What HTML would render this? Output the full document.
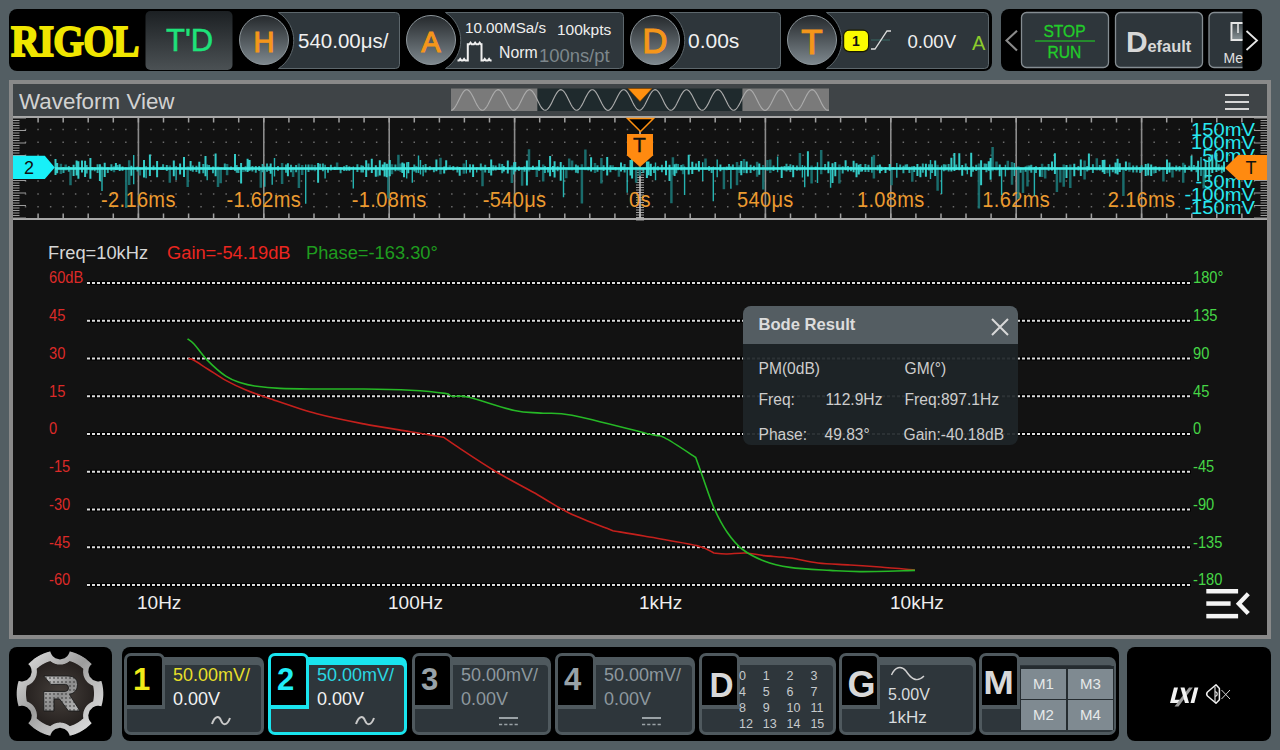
<!DOCTYPE html><html><head><meta charset="utf-8"><style>*{margin:0;padding:0;box-sizing:border-box}
html,body{width:1280px;height:750px;overflow:hidden;background:#535e63;font-family:"Liberation Sans",sans-serif}
.abs{position:absolute}
.t{position:absolute;white-space:nowrap;line-height:1}
</style></head><body><svg class="abs" style="left:0;top:0" width="1280" height="80"><defs><linearGradient id="cg" x1="0" y1="0" x2="0" y2="1"><stop offset="0" stop-color="#25292c"/><stop offset="1" stop-color="#7e888e"/></linearGradient><linearGradient id="tdg" x1="0" y1="0" x2="0" y2="1"><stop offset="0" stop-color="#1c2023"/><stop offset="1" stop-color="#4b5154"/></linearGradient></defs><rect x="9" y="9" width="983" height="62" rx="8" fill="#000"/><rect x="1001" y="9" width="261" height="62" rx="8" fill="#000"/><rect x="145.5" y="11" width="87" height="59" rx="5" fill="url(#tdg)"/><path d="M278.48,12.5 H395.5 a4,4 0 0 1 4,4 V64.5 a4,4 0 0 1 -4,4 H278.48 A33.3,33.3 0 0 0 278.48,12.5 Z" fill="#2e363b" stroke="#5d676c" stroke-width="1"/><circle cx="264" cy="40" r="24.5" fill="url(#cg)" stroke="#8c959a" stroke-width="1"/><path d="M445.48,12.5 H619.5 a4,4 0 0 1 4,4 V64.5 a4,4 0 0 1 -4,4 H445.48 A33.3,33.3 0 0 0 445.48,12.5 Z" fill="#2e363b" stroke="#5d676c" stroke-width="1"/><circle cx="431" cy="40" r="24.5" fill="url(#cg)" stroke="#8c959a" stroke-width="1"/><path d="M669.48,12.5 H776.5 a4,4 0 0 1 4,4 V64.5 a4,4 0 0 1 -4,4 H669.48 A33.3,33.3 0 0 0 669.48,12.5 Z" fill="#2e363b" stroke="#5d676c" stroke-width="1"/><circle cx="655" cy="40" r="24.5" fill="url(#cg)" stroke="#8c959a" stroke-width="1"/><path d="M826.48,12.5 H984.5 a4,4 0 0 1 4,4 V64.5 a4,4 0 0 1 -4,4 H826.48 A33.3,33.3 0 0 0 826.48,12.5 Z" fill="#2e363b" stroke="#5d676c" stroke-width="1"/><circle cx="812" cy="40" r="24.5" fill="url(#cg)" stroke="#8c959a" stroke-width="1"/><path d="M457.5,60.5 h1.5 l1.2,-1.6 l1.2,1.6 h1.5 l1.2,-1.6 l1.2,1.6 h2.5 V44.3 h1.5 l1.2,-1.6 l1.2,1.6 h2.2 l1.2,-1.6 l1.2,1.6 h2.2 l1.2,-1.6 l1.2,1.6 h0.6 V60.5 h2 l1.2,-1.6 l1.2,1.6 h2 l1.2,-1.6 l1.2,1.6 h1.3" fill="none" stroke="#f0f0f0" stroke-width="2"/><rect x="843.6" y="30.2" width="25" height="21.4" rx="5.5" fill="#fbfb00" stroke="#1a1a00" stroke-width="1.2"/><line x1="871" y1="40" x2="890" y2="40" stroke="#36625f" stroke-width="1.2"/><path d="M871,49 h4 L887,31 h4" fill="none" stroke="#dddddd" stroke-width="1.3"/><rect x="1021.5" y="12.5" width="87" height="55" rx="5" fill="#2e363b" stroke="#858d92" stroke-width="1.3"/><line x1="1035" y1="41" x2="1095" y2="41" stroke="#23a82a" stroke-width="1.3"/><rect x="1115.5" y="12.5" width="87" height="55" rx="5" fill="#2e363b" stroke="#858d92" stroke-width="1.3"/><clipPath id="clipm"><rect x="1205" y="0" width="37.5" height="80"/></clipPath><g clip-path="url(#clipm)"><rect x="1209" y="12.5" width="87" height="55" rx="5" fill="#2e363b" stroke="#858d92" stroke-width="1.3"/><linearGradient id="mg" x1="0" y1="0" x2="0" y2="1"><stop offset="0" stop-color="#3a4246"/><stop offset="1" stop-color="#8a9498"/></linearGradient><rect x="1232.5" y="23" width="12" height="17" fill="url(#mg)"/><path d="M1231.5,23 h14 v17 h-14 Z" fill="none" stroke="#e6e6e6" stroke-width="2"/><line x1="1238" y1="24" x2="1238" y2="33" stroke="#eee" stroke-width="1.5"/></g><path d="M1017,30.8 L1006.5,40.5 L1017,50.5" fill="none" stroke="#8a8a8a" stroke-width="2.1"/><path d="M1246.5,31 L1257,40.5 L1246.5,50" fill="none" stroke="#e6e6e6" stroke-width="1.8"/></svg><div class="t" style="left:11px;top:19px;font-family:'Liberation Serif', serif;font-weight:bold;font-size:45px;color:#f0e600;-webkit-text-stroke:1.8px #f0e600;transform:scaleX(0.88);transform-origin:0 0;letter-spacing:-1px">RIGOL</div><div class="t" style="left:166px;top:25px;font-size:31px;color:#1ee27a;-webkit-text-stroke:0.5px #1ee27a">T'D</div><div class="t" style="left:239px;top:27.5px;width:50px;text-align:center;font-size:29px;color:#f5961a;-webkit-text-stroke:1.1px #f5961a">H</div><div class="t" style="left:406px;top:28px;width:50px;text-align:center;font-size:29px;color:#f5961a;-webkit-text-stroke:1.1px #f5961a">A</div><div class="t" style="left:630px;top:23px;width:50px;text-align:center;font-size:35px;color:#f5961a;-webkit-text-stroke:1.1px #f5961a">D</div><div class="t" style="left:787px;top:23.5px;width:50px;text-align:center;font-size:35px;color:#f5961a;-webkit-text-stroke:1.1px #f5961a">T</div><div class="t" style="left:298px;top:31px;font-size:20.5px;color:#f0f0f0">540.00&mu;s/</div><div class="t" style="left:465px;top:20px;font-size:15.2px;color:#eeeeee">10.00MSa/s</div><div class="t" style="left:557px;top:22px;font-size:15.5px;color:#eeeeee">100kpts</div><div class="t" style="left:499px;top:45px;font-size:15.8px;color:#eeeeee">Norm</div><div class="t" style="left:539px;top:47px;font-size:18.4px;color:#7d878c">100ns/pt</div><div class="t" style="left:688px;top:30px;font-size:21px;color:#f0f0f0">0.00s</div><div class="t" style="left:850px;top:34px;width:12px;text-align:center;font-size:14px;font-weight:bold;color:#111">1</div><div class="t" style="left:907.5px;top:32.5px;font-size:18.6px;color:#f0f0f0">0.00V</div><div class="t" style="left:972px;top:32.5px;font-size:20px;color:#8ccc2c">A</div><div class="t" style="left:1021px;top:23.5px;width:87px;text-align:center;font-size:15.6px;color:#22cc2a;-webkit-text-stroke:0.3px #22cc2a">STOP</div><div class="t" style="left:1021px;top:44.5px;width:87px;text-align:center;font-size:15.6px;color:#22cc2a;-webkit-text-stroke:0.3px #22cc2a">RUN</div><div class="t" style="left:1126px;top:27px;font-size:30px;font-weight:bold;color:#d8d8d8">D</div><div class="t" style="left:1147.5px;top:37.5px;font-size:16.4px;font-weight:bold;color:#d8d8d8">efault</div><div class="t" style="left:1223.5px;top:50.5px;font-size:14px;color:#e0e0e0;clip-path:inset(0 0 0 0)"><span style="display:inline-block;width:20px;overflow:hidden">Me</span></div><div class="abs" style="left:9px;top:80px;width:1262px;height:559px;border:4px solid #898989;background:#121212"></div><div class="abs" style="left:13px;top:84px;width:1254px;height:32px;background:#3f4447"></div><div class="t" style="left:19px;top:91px;font-size:22.4px;color:#d2d2d2">Waveform View</div><div class="abs" style="left:1225px;top:94px;width:24px;height:2px;background:#d8d8d8"></div><div class="abs" style="left:1225px;top:101px;width:24px;height:2px;background:#d8d8d8"></div><div class="abs" style="left:1225px;top:107.5px;width:24px;height:2px;background:#d8d8d8"></div><svg class="abs" style="left:0;top:80px" width="1280" height="40"><rect x="451" y="8.5" width="86.5" height="22.5" fill="#7a7a7a"/><rect x="537.5" y="8.5" width="205" height="22.5" fill="#1f2a2d"/><rect x="742.5" y="8.5" width="86.5" height="22.5" fill="#7a7a7a"/><polyline points="451.0,30.30 452.0,30.09 453.0,29.49 454.0,28.50 455.0,27.17 456.0,25.56 457.0,23.73 458.0,21.74 459.0,19.69 460.0,17.65 461.0,15.70 462.0,13.93 463.0,12.40 464.0,11.17 465.0,10.29 466.0,9.80 467.0,9.72 468.0,10.05 469.0,10.77 470.0,11.87 471.0,13.28 472.0,14.97 473.0,16.86 474.0,18.87 475.0,20.93 476.0,22.95 477.0,24.85 478.0,26.56 479.0,28.01 480.0,29.13 481.0,29.90 482.0,30.27 483.0,30.23 484.0,29.78 485.0,28.94 486.0,27.74 487.0,26.24 488.0,24.48 489.0,22.55 490.0,20.52 491.0,18.46 492.0,16.47 493.0,14.61 494.0,12.98 495.0,11.62 496.0,10.60 497.0,9.95 498.0,9.70 499.0,9.87 500.0,10.44 501.0,11.39 502.0,12.68 503.0,14.27 504.0,16.08 505.0,18.05 506.0,20.10 507.0,22.15 508.0,24.11 509.0,25.90 510.0,27.46 511.0,28.73 512.0,29.64 513.0,30.17 514.0,30.29 515.0,30.00 516.0,29.32 517.0,28.26 518.0,26.87 519.0,25.21 520.0,23.34 521.0,21.34 522.0,19.28 523.0,17.25 524.0,15.33 525.0,13.60 526.0,12.12 527.0,10.96 528.0,10.16 529.0,9.75 530.0,9.75 531.0,10.16 532.0,10.96 533.0,12.12 534.0,13.60 535.0,15.33 536.0,17.25 537.0,19.28 538.0,21.34 539.0,23.34 540.0,25.21 541.0,26.87 542.0,28.26 543.0,29.32 544.0,30.00 545.0,30.29 546.0,30.17 547.0,29.64 548.0,28.73 549.0,27.46 550.0,25.90 551.0,24.11 552.0,22.15 553.0,20.10 554.0,18.05 555.0,16.08 556.0,14.27 557.0,12.68 558.0,11.39 559.0,10.44 560.0,9.87 561.0,9.70 562.0,9.95 563.0,10.60 564.0,11.62 565.0,12.98 566.0,14.61 567.0,16.47 568.0,18.46 569.0,20.52 570.0,22.55 571.0,24.48 572.0,26.24 573.0,27.74 574.0,28.94 575.0,29.78 576.0,30.23 577.0,30.27 578.0,29.90 579.0,29.13 580.0,28.01 581.0,26.56 582.0,24.85 583.0,22.95 584.0,20.93 585.0,18.87 586.0,16.86 587.0,14.97 588.0,13.28 589.0,11.87 590.0,10.77 591.0,10.05 592.0,9.72 593.0,9.80 594.0,10.29 595.0,11.17 596.0,12.40 597.0,13.93 598.0,15.70 599.0,17.65 600.0,19.69 601.0,21.74 602.0,23.73 603.0,25.56 604.0,27.17 605.0,28.50 606.0,29.49 607.0,30.09 608.0,30.30 609.0,30.09 610.0,29.49 611.0,28.50 612.0,27.17 613.0,25.56 614.0,23.73 615.0,21.74 616.0,19.69 617.0,17.65 618.0,15.70 619.0,13.93 620.0,12.40 621.0,11.17 622.0,10.29 623.0,9.80 624.0,9.72 625.0,10.05 626.0,10.77 627.0,11.87 628.0,13.28 629.0,14.97 630.0,16.86 631.0,18.87 632.0,20.93 633.0,22.95 634.0,24.85 635.0,26.56 636.0,28.01 637.0,29.13 638.0,29.90 639.0,30.27 640.0,30.23 641.0,29.78 642.0,28.94 643.0,27.74 644.0,26.24 645.0,24.48 646.0,22.55 647.0,20.52 648.0,18.46 649.0,16.47 650.0,14.61 651.0,12.98 652.0,11.62 653.0,10.60 654.0,9.95 655.0,9.70 656.0,9.87 657.0,10.44 658.0,11.39 659.0,12.68 660.0,14.27 661.0,16.08 662.0,18.05 663.0,20.10 664.0,22.15 665.0,24.11 666.0,25.90 667.0,27.46 668.0,28.73 669.0,29.64 670.0,30.17 671.0,30.29 672.0,30.00 673.0,29.32 674.0,28.26 675.0,26.87 676.0,25.21 677.0,23.34 678.0,21.34 679.0,19.28 680.0,17.25 681.0,15.33 682.0,13.60 683.0,12.12 684.0,10.96 685.0,10.16 686.0,9.75 687.0,9.75 688.0,10.16 689.0,10.96 690.0,12.12 691.0,13.60 692.0,15.33 693.0,17.25 694.0,19.28 695.0,21.34 696.0,23.34 697.0,25.21 698.0,26.87 699.0,28.26 700.0,29.32 701.0,30.00 702.0,30.29 703.0,30.17 704.0,29.64 705.0,28.73 706.0,27.46 707.0,25.90 708.0,24.11 709.0,22.15 710.0,20.10 711.0,18.05 712.0,16.08 713.0,14.27 714.0,12.68 715.0,11.39 716.0,10.44 717.0,9.87 718.0,9.70 719.0,9.95 720.0,10.60 721.0,11.62 722.0,12.98 723.0,14.61 724.0,16.47 725.0,18.46 726.0,20.52 727.0,22.55 728.0,24.48 729.0,26.24 730.0,27.74 731.0,28.94 732.0,29.78 733.0,30.23 734.0,30.27 735.0,29.90 736.0,29.13 737.0,28.01 738.0,26.56 739.0,24.85 740.0,22.95 741.0,20.93 742.0,18.87 743.0,16.86 744.0,14.97 745.0,13.28 746.0,11.87 747.0,10.77 748.0,10.05 749.0,9.72 750.0,9.80 751.0,10.29 752.0,11.17 753.0,12.40 754.0,13.93 755.0,15.70 756.0,17.65 757.0,19.69 758.0,21.74 759.0,23.73 760.0,25.56 761.0,27.17 762.0,28.50 763.0,29.49 764.0,30.09 765.0,30.30 766.0,30.09 767.0,29.49 768.0,28.50 769.0,27.17 770.0,25.56 771.0,23.73 772.0,21.74 773.0,19.69 774.0,17.65 775.0,15.70 776.0,13.93 777.0,12.40 778.0,11.17 779.0,10.29 780.0,9.80 781.0,9.72 782.0,10.05 783.0,10.77 784.0,11.87 785.0,13.28 786.0,14.97 787.0,16.86 788.0,18.87 789.0,20.93 790.0,22.95 791.0,24.85 792.0,26.56 793.0,28.01 794.0,29.13 795.0,29.90 796.0,30.27 797.0,30.23 798.0,29.78 799.0,28.94 800.0,27.74 801.0,26.24 802.0,24.48 803.0,22.55 804.0,20.52 805.0,18.46 806.0,16.47 807.0,14.61 808.0,12.98 809.0,11.62 810.0,10.60 811.0,9.95 812.0,9.70 813.0,9.87 814.0,10.44 815.0,11.39 816.0,12.68 817.0,14.27 818.0,16.08 819.0,18.05 820.0,20.10 821.0,22.15 822.0,24.11 823.0,25.90 824.0,27.46 825.0,28.73 826.0,29.64 827.0,30.17 828.0,30.29 829.0,30.00" fill="none" stroke="#ababab" stroke-width="1.15"/><path d="M628,8.5 L652,8.5 L640,21.5 Z" fill="#ff9010" stroke="#7a4000" stroke-width="0.6"/></svg><svg class="abs" style="left:0;top:0" width="1280" height="230"><rect x="13" y="116" width="1254" height="104" fill="#111111"/><path d="M24.8,128.7h1.5v1.5h-1.5zM37.3,128.7h1.5v1.5h-1.5zM49.9,128.7h1.5v1.5h-1.5zM62.4,128.7h1.5v1.5h-1.5zM74.9,128.7h1.5v1.5h-1.5zM87.5,128.7h1.5v1.5h-1.5zM100.0,128.7h1.5v1.5h-1.5zM112.6,128.7h1.5v1.5h-1.5zM125.1,128.7h1.5v1.5h-1.5zM137.6,128.7h1.5v1.5h-1.5zM150.2,128.7h1.5v1.5h-1.5zM162.7,128.7h1.5v1.5h-1.5zM175.3,128.7h1.5v1.5h-1.5zM187.8,128.7h1.5v1.5h-1.5zM200.3,128.7h1.5v1.5h-1.5zM212.9,128.7h1.5v1.5h-1.5zM225.4,128.7h1.5v1.5h-1.5zM238.0,128.7h1.5v1.5h-1.5zM250.5,128.7h1.5v1.5h-1.5zM263.0,128.7h1.5v1.5h-1.5zM275.6,128.7h1.5v1.5h-1.5zM288.1,128.7h1.5v1.5h-1.5zM300.7,128.7h1.5v1.5h-1.5zM313.2,128.7h1.5v1.5h-1.5zM325.8,128.7h1.5v1.5h-1.5zM338.3,128.7h1.5v1.5h-1.5zM350.8,128.7h1.5v1.5h-1.5zM363.4,128.7h1.5v1.5h-1.5zM375.9,128.7h1.5v1.5h-1.5zM388.4,128.7h1.5v1.5h-1.5zM401.0,128.7h1.5v1.5h-1.5zM413.5,128.7h1.5v1.5h-1.5zM426.1,128.7h1.5v1.5h-1.5zM438.6,128.7h1.5v1.5h-1.5zM451.1,128.7h1.5v1.5h-1.5zM463.7,128.7h1.5v1.5h-1.5zM476.2,128.7h1.5v1.5h-1.5zM488.8,128.7h1.5v1.5h-1.5zM501.3,128.7h1.5v1.5h-1.5zM513.8,128.7h1.5v1.5h-1.5zM526.4,128.7h1.5v1.5h-1.5zM538.9,128.7h1.5v1.5h-1.5zM551.5,128.7h1.5v1.5h-1.5zM564.0,128.7h1.5v1.5h-1.5zM576.5,128.7h1.5v1.5h-1.5zM589.1,128.7h1.5v1.5h-1.5zM601.6,128.7h1.5v1.5h-1.5zM614.2,128.7h1.5v1.5h-1.5zM626.7,128.7h1.5v1.5h-1.5zM639.2,128.7h1.5v1.5h-1.5zM651.8,128.7h1.5v1.5h-1.5zM664.3,128.7h1.5v1.5h-1.5zM676.9,128.7h1.5v1.5h-1.5zM689.4,128.7h1.5v1.5h-1.5zM701.9,128.7h1.5v1.5h-1.5zM714.5,128.7h1.5v1.5h-1.5zM727.0,128.7h1.5v1.5h-1.5zM739.6,128.7h1.5v1.5h-1.5zM752.1,128.7h1.5v1.5h-1.5zM764.6,128.7h1.5v1.5h-1.5zM777.2,128.7h1.5v1.5h-1.5zM789.7,128.7h1.5v1.5h-1.5zM802.3,128.7h1.5v1.5h-1.5zM814.8,128.7h1.5v1.5h-1.5zM827.3,128.7h1.5v1.5h-1.5zM839.9,128.7h1.5v1.5h-1.5zM852.4,128.7h1.5v1.5h-1.5zM865.0,128.7h1.5v1.5h-1.5zM877.5,128.7h1.5v1.5h-1.5zM890.0,128.7h1.5v1.5h-1.5zM902.6,128.7h1.5v1.5h-1.5zM915.1,128.7h1.5v1.5h-1.5zM927.7,128.7h1.5v1.5h-1.5zM940.2,128.7h1.5v1.5h-1.5zM952.7,128.7h1.5v1.5h-1.5zM965.3,128.7h1.5v1.5h-1.5zM977.8,128.7h1.5v1.5h-1.5zM990.4,128.7h1.5v1.5h-1.5zM1002.9,128.7h1.5v1.5h-1.5zM1015.4,128.7h1.5v1.5h-1.5zM1028.0,128.7h1.5v1.5h-1.5zM1040.5,128.7h1.5v1.5h-1.5zM1053.1,128.7h1.5v1.5h-1.5zM1065.6,128.7h1.5v1.5h-1.5zM1078.1,128.7h1.5v1.5h-1.5zM1090.7,128.7h1.5v1.5h-1.5zM1103.2,128.7h1.5v1.5h-1.5zM1115.8,128.7h1.5v1.5h-1.5zM1128.3,128.7h1.5v1.5h-1.5zM1140.8,128.7h1.5v1.5h-1.5zM1153.4,128.7h1.5v1.5h-1.5zM1165.9,128.7h1.5v1.5h-1.5zM1178.5,128.7h1.5v1.5h-1.5zM1191.0,128.7h1.5v1.5h-1.5zM1203.5,128.7h1.5v1.5h-1.5zM1216.1,128.7h1.5v1.5h-1.5zM1228.6,128.7h1.5v1.5h-1.5zM1241.2,128.7h1.5v1.5h-1.5zM1253.7,128.7h1.5v1.5h-1.5zM24.8,141.6h1.5v1.5h-1.5zM37.3,141.6h1.5v1.5h-1.5zM49.9,141.6h1.5v1.5h-1.5zM62.4,141.6h1.5v1.5h-1.5zM74.9,141.6h1.5v1.5h-1.5zM87.5,141.6h1.5v1.5h-1.5zM100.0,141.6h1.5v1.5h-1.5zM112.6,141.6h1.5v1.5h-1.5zM125.1,141.6h1.5v1.5h-1.5zM137.6,141.6h1.5v1.5h-1.5zM150.2,141.6h1.5v1.5h-1.5zM162.7,141.6h1.5v1.5h-1.5zM175.3,141.6h1.5v1.5h-1.5zM187.8,141.6h1.5v1.5h-1.5zM200.3,141.6h1.5v1.5h-1.5zM212.9,141.6h1.5v1.5h-1.5zM225.4,141.6h1.5v1.5h-1.5zM238.0,141.6h1.5v1.5h-1.5zM250.5,141.6h1.5v1.5h-1.5zM263.0,141.6h1.5v1.5h-1.5zM275.6,141.6h1.5v1.5h-1.5zM288.1,141.6h1.5v1.5h-1.5zM300.7,141.6h1.5v1.5h-1.5zM313.2,141.6h1.5v1.5h-1.5zM325.8,141.6h1.5v1.5h-1.5zM338.3,141.6h1.5v1.5h-1.5zM350.8,141.6h1.5v1.5h-1.5zM363.4,141.6h1.5v1.5h-1.5zM375.9,141.6h1.5v1.5h-1.5zM388.4,141.6h1.5v1.5h-1.5zM401.0,141.6h1.5v1.5h-1.5zM413.5,141.6h1.5v1.5h-1.5zM426.1,141.6h1.5v1.5h-1.5zM438.6,141.6h1.5v1.5h-1.5zM451.1,141.6h1.5v1.5h-1.5zM463.7,141.6h1.5v1.5h-1.5zM476.2,141.6h1.5v1.5h-1.5zM488.8,141.6h1.5v1.5h-1.5zM501.3,141.6h1.5v1.5h-1.5zM513.8,141.6h1.5v1.5h-1.5zM526.4,141.6h1.5v1.5h-1.5zM538.9,141.6h1.5v1.5h-1.5zM551.5,141.6h1.5v1.5h-1.5zM564.0,141.6h1.5v1.5h-1.5zM576.5,141.6h1.5v1.5h-1.5zM589.1,141.6h1.5v1.5h-1.5zM601.6,141.6h1.5v1.5h-1.5zM614.2,141.6h1.5v1.5h-1.5zM626.7,141.6h1.5v1.5h-1.5zM639.2,141.6h1.5v1.5h-1.5zM651.8,141.6h1.5v1.5h-1.5zM664.3,141.6h1.5v1.5h-1.5zM676.9,141.6h1.5v1.5h-1.5zM689.4,141.6h1.5v1.5h-1.5zM701.9,141.6h1.5v1.5h-1.5zM714.5,141.6h1.5v1.5h-1.5zM727.0,141.6h1.5v1.5h-1.5zM739.6,141.6h1.5v1.5h-1.5zM752.1,141.6h1.5v1.5h-1.5zM764.6,141.6h1.5v1.5h-1.5zM777.2,141.6h1.5v1.5h-1.5zM789.7,141.6h1.5v1.5h-1.5zM802.3,141.6h1.5v1.5h-1.5zM814.8,141.6h1.5v1.5h-1.5zM827.3,141.6h1.5v1.5h-1.5zM839.9,141.6h1.5v1.5h-1.5zM852.4,141.6h1.5v1.5h-1.5zM865.0,141.6h1.5v1.5h-1.5zM877.5,141.6h1.5v1.5h-1.5zM890.0,141.6h1.5v1.5h-1.5zM902.6,141.6h1.5v1.5h-1.5zM915.1,141.6h1.5v1.5h-1.5zM927.7,141.6h1.5v1.5h-1.5zM940.2,141.6h1.5v1.5h-1.5zM952.7,141.6h1.5v1.5h-1.5zM965.3,141.6h1.5v1.5h-1.5zM977.8,141.6h1.5v1.5h-1.5zM990.4,141.6h1.5v1.5h-1.5zM1002.9,141.6h1.5v1.5h-1.5zM1015.4,141.6h1.5v1.5h-1.5zM1028.0,141.6h1.5v1.5h-1.5zM1040.5,141.6h1.5v1.5h-1.5zM1053.1,141.6h1.5v1.5h-1.5zM1065.6,141.6h1.5v1.5h-1.5zM1078.1,141.6h1.5v1.5h-1.5zM1090.7,141.6h1.5v1.5h-1.5zM1103.2,141.6h1.5v1.5h-1.5zM1115.8,141.6h1.5v1.5h-1.5zM1128.3,141.6h1.5v1.5h-1.5zM1140.8,141.6h1.5v1.5h-1.5zM1153.4,141.6h1.5v1.5h-1.5zM1165.9,141.6h1.5v1.5h-1.5zM1178.5,141.6h1.5v1.5h-1.5zM1191.0,141.6h1.5v1.5h-1.5zM1203.5,141.6h1.5v1.5h-1.5zM1216.1,141.6h1.5v1.5h-1.5zM1228.6,141.6h1.5v1.5h-1.5zM1241.2,141.6h1.5v1.5h-1.5zM1253.7,141.6h1.5v1.5h-1.5zM24.8,154.4h1.5v1.5h-1.5zM37.3,154.4h1.5v1.5h-1.5zM49.9,154.4h1.5v1.5h-1.5zM62.4,154.4h1.5v1.5h-1.5zM74.9,154.4h1.5v1.5h-1.5zM87.5,154.4h1.5v1.5h-1.5zM100.0,154.4h1.5v1.5h-1.5zM112.6,154.4h1.5v1.5h-1.5zM125.1,154.4h1.5v1.5h-1.5zM137.6,154.4h1.5v1.5h-1.5zM150.2,154.4h1.5v1.5h-1.5zM162.7,154.4h1.5v1.5h-1.5zM175.3,154.4h1.5v1.5h-1.5zM187.8,154.4h1.5v1.5h-1.5zM200.3,154.4h1.5v1.5h-1.5zM212.9,154.4h1.5v1.5h-1.5zM225.4,154.4h1.5v1.5h-1.5zM238.0,154.4h1.5v1.5h-1.5zM250.5,154.4h1.5v1.5h-1.5zM263.0,154.4h1.5v1.5h-1.5zM275.6,154.4h1.5v1.5h-1.5zM288.1,154.4h1.5v1.5h-1.5zM300.7,154.4h1.5v1.5h-1.5zM313.2,154.4h1.5v1.5h-1.5zM325.8,154.4h1.5v1.5h-1.5zM338.3,154.4h1.5v1.5h-1.5zM350.8,154.4h1.5v1.5h-1.5zM363.4,154.4h1.5v1.5h-1.5zM375.9,154.4h1.5v1.5h-1.5zM388.4,154.4h1.5v1.5h-1.5zM401.0,154.4h1.5v1.5h-1.5zM413.5,154.4h1.5v1.5h-1.5zM426.1,154.4h1.5v1.5h-1.5zM438.6,154.4h1.5v1.5h-1.5zM451.1,154.4h1.5v1.5h-1.5zM463.7,154.4h1.5v1.5h-1.5zM476.2,154.4h1.5v1.5h-1.5zM488.8,154.4h1.5v1.5h-1.5zM501.3,154.4h1.5v1.5h-1.5zM513.8,154.4h1.5v1.5h-1.5zM526.4,154.4h1.5v1.5h-1.5zM538.9,154.4h1.5v1.5h-1.5zM551.5,154.4h1.5v1.5h-1.5zM564.0,154.4h1.5v1.5h-1.5zM576.5,154.4h1.5v1.5h-1.5zM589.1,154.4h1.5v1.5h-1.5zM601.6,154.4h1.5v1.5h-1.5zM614.2,154.4h1.5v1.5h-1.5zM626.7,154.4h1.5v1.5h-1.5zM639.2,154.4h1.5v1.5h-1.5zM651.8,154.4h1.5v1.5h-1.5zM664.3,154.4h1.5v1.5h-1.5zM676.9,154.4h1.5v1.5h-1.5zM689.4,154.4h1.5v1.5h-1.5zM701.9,154.4h1.5v1.5h-1.5zM714.5,154.4h1.5v1.5h-1.5zM727.0,154.4h1.5v1.5h-1.5zM739.6,154.4h1.5v1.5h-1.5zM752.1,154.4h1.5v1.5h-1.5zM764.6,154.4h1.5v1.5h-1.5zM777.2,154.4h1.5v1.5h-1.5zM789.7,154.4h1.5v1.5h-1.5zM802.3,154.4h1.5v1.5h-1.5zM814.8,154.4h1.5v1.5h-1.5zM827.3,154.4h1.5v1.5h-1.5zM839.9,154.4h1.5v1.5h-1.5zM852.4,154.4h1.5v1.5h-1.5zM865.0,154.4h1.5v1.5h-1.5zM877.5,154.4h1.5v1.5h-1.5zM890.0,154.4h1.5v1.5h-1.5zM902.6,154.4h1.5v1.5h-1.5zM915.1,154.4h1.5v1.5h-1.5zM927.7,154.4h1.5v1.5h-1.5zM940.2,154.4h1.5v1.5h-1.5zM952.7,154.4h1.5v1.5h-1.5zM965.3,154.4h1.5v1.5h-1.5zM977.8,154.4h1.5v1.5h-1.5zM990.4,154.4h1.5v1.5h-1.5zM1002.9,154.4h1.5v1.5h-1.5zM1015.4,154.4h1.5v1.5h-1.5zM1028.0,154.4h1.5v1.5h-1.5zM1040.5,154.4h1.5v1.5h-1.5zM1053.1,154.4h1.5v1.5h-1.5zM1065.6,154.4h1.5v1.5h-1.5zM1078.1,154.4h1.5v1.5h-1.5zM1090.7,154.4h1.5v1.5h-1.5zM1103.2,154.4h1.5v1.5h-1.5zM1115.8,154.4h1.5v1.5h-1.5zM1128.3,154.4h1.5v1.5h-1.5zM1140.8,154.4h1.5v1.5h-1.5zM1153.4,154.4h1.5v1.5h-1.5zM1165.9,154.4h1.5v1.5h-1.5zM1178.5,154.4h1.5v1.5h-1.5zM1191.0,154.4h1.5v1.5h-1.5zM1203.5,154.4h1.5v1.5h-1.5zM1216.1,154.4h1.5v1.5h-1.5zM1228.6,154.4h1.5v1.5h-1.5zM1241.2,154.4h1.5v1.5h-1.5zM1253.7,154.4h1.5v1.5h-1.5zM24.8,167.3h1.5v1.5h-1.5zM37.3,167.3h1.5v1.5h-1.5zM49.9,167.3h1.5v1.5h-1.5zM62.4,167.3h1.5v1.5h-1.5zM74.9,167.3h1.5v1.5h-1.5zM87.5,167.3h1.5v1.5h-1.5zM100.0,167.3h1.5v1.5h-1.5zM112.6,167.3h1.5v1.5h-1.5zM125.1,167.3h1.5v1.5h-1.5zM137.6,167.3h1.5v1.5h-1.5zM150.2,167.3h1.5v1.5h-1.5zM162.7,167.3h1.5v1.5h-1.5zM175.3,167.3h1.5v1.5h-1.5zM187.8,167.3h1.5v1.5h-1.5zM200.3,167.3h1.5v1.5h-1.5zM212.9,167.3h1.5v1.5h-1.5zM225.4,167.3h1.5v1.5h-1.5zM238.0,167.3h1.5v1.5h-1.5zM250.5,167.3h1.5v1.5h-1.5zM263.0,167.3h1.5v1.5h-1.5zM275.6,167.3h1.5v1.5h-1.5zM288.1,167.3h1.5v1.5h-1.5zM300.7,167.3h1.5v1.5h-1.5zM313.2,167.3h1.5v1.5h-1.5zM325.8,167.3h1.5v1.5h-1.5zM338.3,167.3h1.5v1.5h-1.5zM350.8,167.3h1.5v1.5h-1.5zM363.4,167.3h1.5v1.5h-1.5zM375.9,167.3h1.5v1.5h-1.5zM388.4,167.3h1.5v1.5h-1.5zM401.0,167.3h1.5v1.5h-1.5zM413.5,167.3h1.5v1.5h-1.5zM426.1,167.3h1.5v1.5h-1.5zM438.6,167.3h1.5v1.5h-1.5zM451.1,167.3h1.5v1.5h-1.5zM463.7,167.3h1.5v1.5h-1.5zM476.2,167.3h1.5v1.5h-1.5zM488.8,167.3h1.5v1.5h-1.5zM501.3,167.3h1.5v1.5h-1.5zM513.8,167.3h1.5v1.5h-1.5zM526.4,167.3h1.5v1.5h-1.5zM538.9,167.3h1.5v1.5h-1.5zM551.5,167.3h1.5v1.5h-1.5zM564.0,167.3h1.5v1.5h-1.5zM576.5,167.3h1.5v1.5h-1.5zM589.1,167.3h1.5v1.5h-1.5zM601.6,167.3h1.5v1.5h-1.5zM614.2,167.3h1.5v1.5h-1.5zM626.7,167.3h1.5v1.5h-1.5zM639.2,167.3h1.5v1.5h-1.5zM651.8,167.3h1.5v1.5h-1.5zM664.3,167.3h1.5v1.5h-1.5zM676.9,167.3h1.5v1.5h-1.5zM689.4,167.3h1.5v1.5h-1.5zM701.9,167.3h1.5v1.5h-1.5zM714.5,167.3h1.5v1.5h-1.5zM727.0,167.3h1.5v1.5h-1.5zM739.6,167.3h1.5v1.5h-1.5zM752.1,167.3h1.5v1.5h-1.5zM764.6,167.3h1.5v1.5h-1.5zM777.2,167.3h1.5v1.5h-1.5zM789.7,167.3h1.5v1.5h-1.5zM802.3,167.3h1.5v1.5h-1.5zM814.8,167.3h1.5v1.5h-1.5zM827.3,167.3h1.5v1.5h-1.5zM839.9,167.3h1.5v1.5h-1.5zM852.4,167.3h1.5v1.5h-1.5zM865.0,167.3h1.5v1.5h-1.5zM877.5,167.3h1.5v1.5h-1.5zM890.0,167.3h1.5v1.5h-1.5zM902.6,167.3h1.5v1.5h-1.5zM915.1,167.3h1.5v1.5h-1.5zM927.7,167.3h1.5v1.5h-1.5zM940.2,167.3h1.5v1.5h-1.5zM952.7,167.3h1.5v1.5h-1.5zM965.3,167.3h1.5v1.5h-1.5zM977.8,167.3h1.5v1.5h-1.5zM990.4,167.3h1.5v1.5h-1.5zM1002.9,167.3h1.5v1.5h-1.5zM1015.4,167.3h1.5v1.5h-1.5zM1028.0,167.3h1.5v1.5h-1.5zM1040.5,167.3h1.5v1.5h-1.5zM1053.1,167.3h1.5v1.5h-1.5zM1065.6,167.3h1.5v1.5h-1.5zM1078.1,167.3h1.5v1.5h-1.5zM1090.7,167.3h1.5v1.5h-1.5zM1103.2,167.3h1.5v1.5h-1.5zM1115.8,167.3h1.5v1.5h-1.5zM1128.3,167.3h1.5v1.5h-1.5zM1140.8,167.3h1.5v1.5h-1.5zM1153.4,167.3h1.5v1.5h-1.5zM1165.9,167.3h1.5v1.5h-1.5zM1178.5,167.3h1.5v1.5h-1.5zM1191.0,167.3h1.5v1.5h-1.5zM1203.5,167.3h1.5v1.5h-1.5zM1216.1,167.3h1.5v1.5h-1.5zM1228.6,167.3h1.5v1.5h-1.5zM1241.2,167.3h1.5v1.5h-1.5zM1253.7,167.3h1.5v1.5h-1.5zM24.8,180.2h1.5v1.5h-1.5zM37.3,180.2h1.5v1.5h-1.5zM49.9,180.2h1.5v1.5h-1.5zM62.4,180.2h1.5v1.5h-1.5zM74.9,180.2h1.5v1.5h-1.5zM87.5,180.2h1.5v1.5h-1.5zM100.0,180.2h1.5v1.5h-1.5zM112.6,180.2h1.5v1.5h-1.5zM125.1,180.2h1.5v1.5h-1.5zM137.6,180.2h1.5v1.5h-1.5zM150.2,180.2h1.5v1.5h-1.5zM162.7,180.2h1.5v1.5h-1.5zM175.3,180.2h1.5v1.5h-1.5zM187.8,180.2h1.5v1.5h-1.5zM200.3,180.2h1.5v1.5h-1.5zM212.9,180.2h1.5v1.5h-1.5zM225.4,180.2h1.5v1.5h-1.5zM238.0,180.2h1.5v1.5h-1.5zM250.5,180.2h1.5v1.5h-1.5zM263.0,180.2h1.5v1.5h-1.5zM275.6,180.2h1.5v1.5h-1.5zM288.1,180.2h1.5v1.5h-1.5zM300.7,180.2h1.5v1.5h-1.5zM313.2,180.2h1.5v1.5h-1.5zM325.8,180.2h1.5v1.5h-1.5zM338.3,180.2h1.5v1.5h-1.5zM350.8,180.2h1.5v1.5h-1.5zM363.4,180.2h1.5v1.5h-1.5zM375.9,180.2h1.5v1.5h-1.5zM388.4,180.2h1.5v1.5h-1.5zM401.0,180.2h1.5v1.5h-1.5zM413.5,180.2h1.5v1.5h-1.5zM426.1,180.2h1.5v1.5h-1.5zM438.6,180.2h1.5v1.5h-1.5zM451.1,180.2h1.5v1.5h-1.5zM463.7,180.2h1.5v1.5h-1.5zM476.2,180.2h1.5v1.5h-1.5zM488.8,180.2h1.5v1.5h-1.5zM501.3,180.2h1.5v1.5h-1.5zM513.8,180.2h1.5v1.5h-1.5zM526.4,180.2h1.5v1.5h-1.5zM538.9,180.2h1.5v1.5h-1.5zM551.5,180.2h1.5v1.5h-1.5zM564.0,180.2h1.5v1.5h-1.5zM576.5,180.2h1.5v1.5h-1.5zM589.1,180.2h1.5v1.5h-1.5zM601.6,180.2h1.5v1.5h-1.5zM614.2,180.2h1.5v1.5h-1.5zM626.7,180.2h1.5v1.5h-1.5zM639.2,180.2h1.5v1.5h-1.5zM651.8,180.2h1.5v1.5h-1.5zM664.3,180.2h1.5v1.5h-1.5zM676.9,180.2h1.5v1.5h-1.5zM689.4,180.2h1.5v1.5h-1.5zM701.9,180.2h1.5v1.5h-1.5zM714.5,180.2h1.5v1.5h-1.5zM727.0,180.2h1.5v1.5h-1.5zM739.6,180.2h1.5v1.5h-1.5zM752.1,180.2h1.5v1.5h-1.5zM764.6,180.2h1.5v1.5h-1.5zM777.2,180.2h1.5v1.5h-1.5zM789.7,180.2h1.5v1.5h-1.5zM802.3,180.2h1.5v1.5h-1.5zM814.8,180.2h1.5v1.5h-1.5zM827.3,180.2h1.5v1.5h-1.5zM839.9,180.2h1.5v1.5h-1.5zM852.4,180.2h1.5v1.5h-1.5zM865.0,180.2h1.5v1.5h-1.5zM877.5,180.2h1.5v1.5h-1.5zM890.0,180.2h1.5v1.5h-1.5zM902.6,180.2h1.5v1.5h-1.5zM915.1,180.2h1.5v1.5h-1.5zM927.7,180.2h1.5v1.5h-1.5zM940.2,180.2h1.5v1.5h-1.5zM952.7,180.2h1.5v1.5h-1.5zM965.3,180.2h1.5v1.5h-1.5zM977.8,180.2h1.5v1.5h-1.5zM990.4,180.2h1.5v1.5h-1.5zM1002.9,180.2h1.5v1.5h-1.5zM1015.4,180.2h1.5v1.5h-1.5zM1028.0,180.2h1.5v1.5h-1.5zM1040.5,180.2h1.5v1.5h-1.5zM1053.1,180.2h1.5v1.5h-1.5zM1065.6,180.2h1.5v1.5h-1.5zM1078.1,180.2h1.5v1.5h-1.5zM1090.7,180.2h1.5v1.5h-1.5zM1103.2,180.2h1.5v1.5h-1.5zM1115.8,180.2h1.5v1.5h-1.5zM1128.3,180.2h1.5v1.5h-1.5zM1140.8,180.2h1.5v1.5h-1.5zM1153.4,180.2h1.5v1.5h-1.5zM1165.9,180.2h1.5v1.5h-1.5zM1178.5,180.2h1.5v1.5h-1.5zM1191.0,180.2h1.5v1.5h-1.5zM1203.5,180.2h1.5v1.5h-1.5zM1216.1,180.2h1.5v1.5h-1.5zM1228.6,180.2h1.5v1.5h-1.5zM1241.2,180.2h1.5v1.5h-1.5zM1253.7,180.2h1.5v1.5h-1.5zM24.8,193.2h1.5v1.5h-1.5zM37.3,193.2h1.5v1.5h-1.5zM49.9,193.2h1.5v1.5h-1.5zM62.4,193.2h1.5v1.5h-1.5zM74.9,193.2h1.5v1.5h-1.5zM87.5,193.2h1.5v1.5h-1.5zM100.0,193.2h1.5v1.5h-1.5zM112.6,193.2h1.5v1.5h-1.5zM125.1,193.2h1.5v1.5h-1.5zM137.6,193.2h1.5v1.5h-1.5zM150.2,193.2h1.5v1.5h-1.5zM162.7,193.2h1.5v1.5h-1.5zM175.3,193.2h1.5v1.5h-1.5zM187.8,193.2h1.5v1.5h-1.5zM200.3,193.2h1.5v1.5h-1.5zM212.9,193.2h1.5v1.5h-1.5zM225.4,193.2h1.5v1.5h-1.5zM238.0,193.2h1.5v1.5h-1.5zM250.5,193.2h1.5v1.5h-1.5zM263.0,193.2h1.5v1.5h-1.5zM275.6,193.2h1.5v1.5h-1.5zM288.1,193.2h1.5v1.5h-1.5zM300.7,193.2h1.5v1.5h-1.5zM313.2,193.2h1.5v1.5h-1.5zM325.8,193.2h1.5v1.5h-1.5zM338.3,193.2h1.5v1.5h-1.5zM350.8,193.2h1.5v1.5h-1.5zM363.4,193.2h1.5v1.5h-1.5zM375.9,193.2h1.5v1.5h-1.5zM388.4,193.2h1.5v1.5h-1.5zM401.0,193.2h1.5v1.5h-1.5zM413.5,193.2h1.5v1.5h-1.5zM426.1,193.2h1.5v1.5h-1.5zM438.6,193.2h1.5v1.5h-1.5zM451.1,193.2h1.5v1.5h-1.5zM463.7,193.2h1.5v1.5h-1.5zM476.2,193.2h1.5v1.5h-1.5zM488.8,193.2h1.5v1.5h-1.5zM501.3,193.2h1.5v1.5h-1.5zM513.8,193.2h1.5v1.5h-1.5zM526.4,193.2h1.5v1.5h-1.5zM538.9,193.2h1.5v1.5h-1.5zM551.5,193.2h1.5v1.5h-1.5zM564.0,193.2h1.5v1.5h-1.5zM576.5,193.2h1.5v1.5h-1.5zM589.1,193.2h1.5v1.5h-1.5zM601.6,193.2h1.5v1.5h-1.5zM614.2,193.2h1.5v1.5h-1.5zM626.7,193.2h1.5v1.5h-1.5zM639.2,193.2h1.5v1.5h-1.5zM651.8,193.2h1.5v1.5h-1.5zM664.3,193.2h1.5v1.5h-1.5zM676.9,193.2h1.5v1.5h-1.5zM689.4,193.2h1.5v1.5h-1.5zM701.9,193.2h1.5v1.5h-1.5zM714.5,193.2h1.5v1.5h-1.5zM727.0,193.2h1.5v1.5h-1.5zM739.6,193.2h1.5v1.5h-1.5zM752.1,193.2h1.5v1.5h-1.5zM764.6,193.2h1.5v1.5h-1.5zM777.2,193.2h1.5v1.5h-1.5zM789.7,193.2h1.5v1.5h-1.5zM802.3,193.2h1.5v1.5h-1.5zM814.8,193.2h1.5v1.5h-1.5zM827.3,193.2h1.5v1.5h-1.5zM839.9,193.2h1.5v1.5h-1.5zM852.4,193.2h1.5v1.5h-1.5zM865.0,193.2h1.5v1.5h-1.5zM877.5,193.2h1.5v1.5h-1.5zM890.0,193.2h1.5v1.5h-1.5zM902.6,193.2h1.5v1.5h-1.5zM915.1,193.2h1.5v1.5h-1.5zM927.7,193.2h1.5v1.5h-1.5zM940.2,193.2h1.5v1.5h-1.5zM952.7,193.2h1.5v1.5h-1.5zM965.3,193.2h1.5v1.5h-1.5zM977.8,193.2h1.5v1.5h-1.5zM990.4,193.2h1.5v1.5h-1.5zM1002.9,193.2h1.5v1.5h-1.5zM1015.4,193.2h1.5v1.5h-1.5zM1028.0,193.2h1.5v1.5h-1.5zM1040.5,193.2h1.5v1.5h-1.5zM1053.1,193.2h1.5v1.5h-1.5zM1065.6,193.2h1.5v1.5h-1.5zM1078.1,193.2h1.5v1.5h-1.5zM1090.7,193.2h1.5v1.5h-1.5zM1103.2,193.2h1.5v1.5h-1.5zM1115.8,193.2h1.5v1.5h-1.5zM1128.3,193.2h1.5v1.5h-1.5zM1140.8,193.2h1.5v1.5h-1.5zM1153.4,193.2h1.5v1.5h-1.5zM1165.9,193.2h1.5v1.5h-1.5zM1178.5,193.2h1.5v1.5h-1.5zM1191.0,193.2h1.5v1.5h-1.5zM1203.5,193.2h1.5v1.5h-1.5zM1216.1,193.2h1.5v1.5h-1.5zM1228.6,193.2h1.5v1.5h-1.5zM1241.2,193.2h1.5v1.5h-1.5zM1253.7,193.2h1.5v1.5h-1.5zM24.8,206.1h1.5v1.5h-1.5zM37.3,206.1h1.5v1.5h-1.5zM49.9,206.1h1.5v1.5h-1.5zM62.4,206.1h1.5v1.5h-1.5zM74.9,206.1h1.5v1.5h-1.5zM87.5,206.1h1.5v1.5h-1.5zM100.0,206.1h1.5v1.5h-1.5zM112.6,206.1h1.5v1.5h-1.5zM125.1,206.1h1.5v1.5h-1.5zM137.6,206.1h1.5v1.5h-1.5zM150.2,206.1h1.5v1.5h-1.5zM162.7,206.1h1.5v1.5h-1.5zM175.3,206.1h1.5v1.5h-1.5zM187.8,206.1h1.5v1.5h-1.5zM200.3,206.1h1.5v1.5h-1.5zM212.9,206.1h1.5v1.5h-1.5zM225.4,206.1h1.5v1.5h-1.5zM238.0,206.1h1.5v1.5h-1.5zM250.5,206.1h1.5v1.5h-1.5zM263.0,206.1h1.5v1.5h-1.5zM275.6,206.1h1.5v1.5h-1.5zM288.1,206.1h1.5v1.5h-1.5zM300.7,206.1h1.5v1.5h-1.5zM313.2,206.1h1.5v1.5h-1.5zM325.8,206.1h1.5v1.5h-1.5zM338.3,206.1h1.5v1.5h-1.5zM350.8,206.1h1.5v1.5h-1.5zM363.4,206.1h1.5v1.5h-1.5zM375.9,206.1h1.5v1.5h-1.5zM388.4,206.1h1.5v1.5h-1.5zM401.0,206.1h1.5v1.5h-1.5zM413.5,206.1h1.5v1.5h-1.5zM426.1,206.1h1.5v1.5h-1.5zM438.6,206.1h1.5v1.5h-1.5zM451.1,206.1h1.5v1.5h-1.5zM463.7,206.1h1.5v1.5h-1.5zM476.2,206.1h1.5v1.5h-1.5zM488.8,206.1h1.5v1.5h-1.5zM501.3,206.1h1.5v1.5h-1.5zM513.8,206.1h1.5v1.5h-1.5zM526.4,206.1h1.5v1.5h-1.5zM538.9,206.1h1.5v1.5h-1.5zM551.5,206.1h1.5v1.5h-1.5zM564.0,206.1h1.5v1.5h-1.5zM576.5,206.1h1.5v1.5h-1.5zM589.1,206.1h1.5v1.5h-1.5zM601.6,206.1h1.5v1.5h-1.5zM614.2,206.1h1.5v1.5h-1.5zM626.7,206.1h1.5v1.5h-1.5zM639.2,206.1h1.5v1.5h-1.5zM651.8,206.1h1.5v1.5h-1.5zM664.3,206.1h1.5v1.5h-1.5zM676.9,206.1h1.5v1.5h-1.5zM689.4,206.1h1.5v1.5h-1.5zM701.9,206.1h1.5v1.5h-1.5zM714.5,206.1h1.5v1.5h-1.5zM727.0,206.1h1.5v1.5h-1.5zM739.6,206.1h1.5v1.5h-1.5zM752.1,206.1h1.5v1.5h-1.5zM764.6,206.1h1.5v1.5h-1.5zM777.2,206.1h1.5v1.5h-1.5zM789.7,206.1h1.5v1.5h-1.5zM802.3,206.1h1.5v1.5h-1.5zM814.8,206.1h1.5v1.5h-1.5zM827.3,206.1h1.5v1.5h-1.5zM839.9,206.1h1.5v1.5h-1.5zM852.4,206.1h1.5v1.5h-1.5zM865.0,206.1h1.5v1.5h-1.5zM877.5,206.1h1.5v1.5h-1.5zM890.0,206.1h1.5v1.5h-1.5zM902.6,206.1h1.5v1.5h-1.5zM915.1,206.1h1.5v1.5h-1.5zM927.7,206.1h1.5v1.5h-1.5zM940.2,206.1h1.5v1.5h-1.5zM952.7,206.1h1.5v1.5h-1.5zM965.3,206.1h1.5v1.5h-1.5zM977.8,206.1h1.5v1.5h-1.5zM990.4,206.1h1.5v1.5h-1.5zM1002.9,206.1h1.5v1.5h-1.5zM1015.4,206.1h1.5v1.5h-1.5zM1028.0,206.1h1.5v1.5h-1.5zM1040.5,206.1h1.5v1.5h-1.5zM1053.1,206.1h1.5v1.5h-1.5zM1065.6,206.1h1.5v1.5h-1.5zM1078.1,206.1h1.5v1.5h-1.5zM1090.7,206.1h1.5v1.5h-1.5zM1103.2,206.1h1.5v1.5h-1.5zM1115.8,206.1h1.5v1.5h-1.5zM1128.3,206.1h1.5v1.5h-1.5zM1140.8,206.1h1.5v1.5h-1.5zM1153.4,206.1h1.5v1.5h-1.5zM1165.9,206.1h1.5v1.5h-1.5zM1178.5,206.1h1.5v1.5h-1.5zM1191.0,206.1h1.5v1.5h-1.5zM1203.5,206.1h1.5v1.5h-1.5zM1216.1,206.1h1.5v1.5h-1.5zM1228.6,206.1h1.5v1.5h-1.5zM1241.2,206.1h1.5v1.5h-1.5zM1253.7,206.1h1.5v1.5h-1.5z" fill="#6a6a6a"/><rect x="13" y="116" width="1254" height="2" fill="#a8a8a8"/><rect x="13" y="218" width="1254" height="2" fill="#a8a8a8"/><rect x="137.6" y="118" width="1.6" height="100" fill="#8c8c8c"/><rect x="263.0" y="118" width="1.6" height="100" fill="#8c8c8c"/><rect x="388.4" y="118" width="1.6" height="100" fill="#8c8c8c"/><rect x="513.8" y="118" width="1.6" height="100" fill="#8c8c8c"/><rect x="764.6" y="118" width="1.6" height="100" fill="#8c8c8c"/><rect x="890.0" y="118" width="1.6" height="100" fill="#8c8c8c"/><rect x="1015.4" y="118" width="1.6" height="100" fill="#8c8c8c"/><rect x="1140.8" y="118" width="1.6" height="100" fill="#8c8c8c"/><path d="M38.1,118v4.5M38.1,218v-4.5M63.2,118v4.5M63.2,218v-4.5M88.2,118v4.5M88.2,218v-4.5M113.3,118v4.5M113.3,218v-4.5M138.4,118v4.5M138.4,218v-4.5M163.5,118v4.5M163.5,218v-4.5M188.6,118v4.5M188.6,218v-4.5M213.6,118v4.5M213.6,218v-4.5M238.7,118v4.5M238.7,218v-4.5M263.8,118v4.5M263.8,218v-4.5M288.9,118v4.5M288.9,218v-4.5M314.0,118v4.5M314.0,218v-4.5M339.0,118v4.5M339.0,218v-4.5M364.1,118v4.5M364.1,218v-4.5M389.2,118v4.5M389.2,218v-4.5M414.3,118v4.5M414.3,218v-4.5M439.4,118v4.5M439.4,218v-4.5M464.4,118v4.5M464.4,218v-4.5M489.5,118v4.5M489.5,218v-4.5M514.6,118v4.5M514.6,218v-4.5M539.7,118v4.5M539.7,218v-4.5M564.8,118v4.5M564.8,218v-4.5M589.8,118v4.5M589.8,218v-4.5M614.9,118v4.5M614.9,218v-4.5M640.0,118v4.5M640.0,218v-4.5M665.1,118v4.5M665.1,218v-4.5M690.2,118v4.5M690.2,218v-4.5M715.2,118v4.5M715.2,218v-4.5M740.3,118v4.5M740.3,218v-4.5M765.4,118v4.5M765.4,218v-4.5M790.5,118v4.5M790.5,218v-4.5M815.6,118v4.5M815.6,218v-4.5M840.6,118v4.5M840.6,218v-4.5M865.7,118v4.5M865.7,218v-4.5M890.8,118v4.5M890.8,218v-4.5M915.9,118v4.5M915.9,218v-4.5M941.0,118v4.5M941.0,218v-4.5M966.0,118v4.5M966.0,218v-4.5M991.1,118v4.5M991.1,218v-4.5M1016.2,118v4.5M1016.2,218v-4.5M1041.3,118v4.5M1041.3,218v-4.5M1066.4,118v4.5M1066.4,218v-4.5M1091.4,118v4.5M1091.4,218v-4.5M1116.5,118v4.5M1116.5,218v-4.5M1141.6,118v4.5M1141.6,218v-4.5M1166.7,118v4.5M1166.7,218v-4.5M1191.8,118v4.5M1191.8,218v-4.5M1216.8,118v4.5M1216.8,218v-4.5M1241.9,118v4.5M1241.9,218v-4.5" stroke="#a0a0a0" stroke-width="1.5"/><path d="M13,118.0h13M1267,118.0h-13M13,120.5h6.5M1267,120.5h-6.5M13,123.0h6.5M1267,123.0h-6.5M13,125.5h6.5M1267,125.5h-6.5M13,128.0h6.5M1267,128.0h-6.5M13,130.5h13M1267,130.5h-13M13,133.0h6.5M1267,133.0h-6.5M13,135.5h6.5M1267,135.5h-6.5M13,138.0h6.5M1267,138.0h-6.5M13,140.5h6.5M1267,140.5h-6.5M13,143.0h13M1267,143.0h-13M13,145.5h6.5M1267,145.5h-6.5M13,148.0h6.5M1267,148.0h-6.5M13,150.5h6.5M1267,150.5h-6.5M13,153.0h6.5M1267,153.0h-6.5M13,155.5h13M1267,155.5h-13M13,158.0h6.5M1267,158.0h-6.5M13,160.5h6.5M1267,160.5h-6.5M13,163.0h6.5M1267,163.0h-6.5M13,165.5h6.5M1267,165.5h-6.5M13,168.0h13M1267,168.0h-13M13,170.5h6.5M1267,170.5h-6.5M13,173.0h6.5M1267,173.0h-6.5M13,175.5h6.5M1267,175.5h-6.5M13,178.0h6.5M1267,178.0h-6.5M13,180.5h13M1267,180.5h-13M13,183.0h6.5M1267,183.0h-6.5M13,185.5h6.5M1267,185.5h-6.5M13,188.0h6.5M1267,188.0h-6.5M13,190.5h6.5M1267,190.5h-6.5M13,193.0h13M1267,193.0h-13M13,195.5h6.5M1267,195.5h-6.5M13,198.0h6.5M1267,198.0h-6.5M13,200.5h6.5M1267,200.5h-6.5M13,203.0h6.5M1267,203.0h-6.5M13,205.5h13M1267,205.5h-13M13,208.0h6.5M1267,208.0h-6.5M13,210.5h6.5M1267,210.5h-6.5M13,213.0h6.5M1267,213.0h-6.5M13,215.5h6.5M1267,215.5h-6.5M13,218.0h13M1267,218.0h-13" stroke="#9c9c9c" stroke-width="1.1"/><path d="M636,170.0h8M636,172.5h8M636,175.0h8M636,177.5h8M636,180.0h8M636,182.5h8M636,185.0h8M636,187.5h8M636,190.0h8M636,192.5h8M636,195.0h8M636,197.5h8M636,200.0h8M636,202.5h8M636,205.0h8M636,207.5h8M636,210.0h8M636,212.5h8M636,215.0h8M636,217.5h8M636,220.0h8" stroke="#b0b0b0" stroke-width="0.9"/><rect x="639.2" y="118" width="1.6" height="100" fill="#bbbbbb"/></svg><div class="t" style="left:78.4px;top:188px;width:120px;text-align:center;font-size:20px;letter-spacing:0.35px;transform:scaleY(1.1);transform-origin:50% 0;color:#eb9a30">-2.16ms</div><div class="t" style="left:203.8px;top:188px;width:120px;text-align:center;font-size:20px;letter-spacing:0.35px;transform:scaleY(1.1);transform-origin:50% 0;color:#eb9a30">-1.62ms</div><div class="t" style="left:329.2px;top:188px;width:120px;text-align:center;font-size:20px;letter-spacing:0.35px;transform:scaleY(1.1);transform-origin:50% 0;color:#eb9a30">-1.08ms</div><div class="t" style="left:454.6px;top:188px;width:120px;text-align:center;font-size:20px;letter-spacing:0.35px;transform:scaleY(1.1);transform-origin:50% 0;color:#eb9a30">-540μs</div><div class="t" style="left:580.0px;top:188px;width:120px;text-align:center;font-size:20px;letter-spacing:0.35px;transform:scaleY(1.1);transform-origin:50% 0;color:#eb9a30">0s</div><div class="t" style="left:705.4px;top:188px;width:120px;text-align:center;font-size:20px;letter-spacing:0.35px;transform:scaleY(1.1);transform-origin:50% 0;color:#eb9a30">540μs</div><div class="t" style="left:830.8px;top:188px;width:120px;text-align:center;font-size:20px;letter-spacing:0.35px;transform:scaleY(1.1);transform-origin:50% 0;color:#eb9a30">1.08ms</div><div class="t" style="left:956.2px;top:188px;width:120px;text-align:center;font-size:20px;letter-spacing:0.35px;transform:scaleY(1.1);transform-origin:50% 0;color:#eb9a30">1.62ms</div><div class="t" style="left:1081.6px;top:188px;width:120px;text-align:center;font-size:20px;letter-spacing:0.35px;transform:scaleY(1.1);transform-origin:50% 0;color:#eb9a30">2.16ms</div><div class="t" style="left:1055px;top:121.1px;width:200px;text-align:right;font-size:18px;color:#28e8f0;transform:scaleX(1.12);transform-origin:100% 0">150mV</div><div class="t" style="left:1055px;top:134.0px;width:200px;text-align:right;font-size:18px;color:#28e8f0;transform:scaleX(1.12);transform-origin:100% 0">100mV</div><div class="t" style="left:1055px;top:146.9px;width:200px;text-align:right;font-size:18px;color:#28e8f0;transform:scaleX(1.12);transform-origin:100% 0">50mV</div><div class="t" style="left:1055px;top:172.7px;width:200px;text-align:right;font-size:18px;color:#28e8f0;transform:scaleX(1.12);transform-origin:100% 0">-50mV</div><div class="t" style="left:1055px;top:185.6px;width:200px;text-align:right;font-size:18px;color:#28e8f0;transform:scaleX(1.12);transform-origin:100% 0">-100mV</div><div class="t" style="left:1055px;top:198.5px;width:200px;text-align:right;font-size:18px;color:#28e8f0;transform:scaleX(1.12);transform-origin:100% 0">-150mV</div><svg class="abs" style="left:0;top:0" width="1280" height="230"><path d="M60.9,163.7V174.0M65.7,164.6V170.4M70.5,167.1V185.2M114.0,165.9V172.3M126.2,167.7V207.7M129.2,160.2V184.9M139.9,167.2V175.4M169.8,165.4V182.8M187.7,166.3V187.0M218.0,166.4V186.9M220.7,167.2V183.2M227.1,164.1V175.3M243.3,167.3V172.1M260.8,167.6V187.7M282.1,163.1V183.9M293.1,166.7V176.9M298.9,163.4V188.1M302.2,165.0V175.0M311.7,164.4V170.4M314.8,165.1V171.3M337.1,162.5V170.0M377.6,167.5V176.5M388.3,164.1V198.6M392.0,164.3V174.2M398.4,154.8V170.9M400.7,163.5V172.0M440.5,157.8V174.3M449.8,165.3V169.5M463.8,163.6V173.7M482.5,166.4V186.3M511.9,165.6V183.1M522.1,167.3V185.8M529.0,149.3V171.6M536.8,166.1V177.1M543.2,164.6V181.4M566.3,167.2V178.3M569.2,158.4V170.2M572.1,160.6V170.6M581.9,164.3V203.5M585.4,149.6V170.2M595.0,163.1V173.0M601.4,158.0V183.4M612.7,165.3V170.1M618.9,167.6V176.8M636.1,166.7V182.7M639.8,165.9V175.8M671.4,167.6V203.2M672.9,157.2V174.8M683.1,164.3V174.3M705.5,158.4V170.1M723.9,166.8V189.3M737.0,162.1V185.3M739.7,165.3V172.9M744.0,159.0V172.9M757.1,161.7V176.8M763.3,164.9V189.6M767.4,160.0V171.0M770.3,159.5V172.9M799.9,152.9V170.8M811.6,165.4V183.5M821.2,150.0V174.2M839.4,164.6V183.6M873.9,155.1V178.6M891.6,167.0V185.3M912.3,166.0V181.8M937.6,164.8V190.7M978.9,163.4V208.5M992.6,147.1V171.3M996.5,161.4V170.4M1007.8,160.8V170.3M1012.0,162.1V184.7M1018.3,166.2V198.7M1023.0,167.7V192.9M1027.5,165.5V186.4M1042.1,163.7V177.0M1045.2,166.6V178.6M1056.9,167.4V191.9M1060.3,167.4V182.5M1063.7,164.4V186.7M1070.3,164.5V188.0M1084.6,160.4V179.5M1096.8,158.3V170.4M1107.5,167.2V173.2M1123.4,167.7V196.1M1129.4,162.6V171.7M1153.9,166.4V173.4M1163.4,166.9V181.5M1172.5,166.2V177.6M1183.2,162.8V182.7M1203.7,167.5V188.6" stroke="#1b7676" stroke-width="2.5" opacity="0.9"/><path d="M102.0,166.6V190.9M133.7,155.0V184.2M146.1,165.9V178.2M176.1,166.0V180.1M207.2,164.5V180.3M264.8,166.2V186.7M272.2,167.6V184.7M274.5,157.9V176.6M305.7,164.5V203.7M325.1,164.8V178.5M353.3,166.5V188.4M406.7,162.3V178.6M412.3,167.1V182.7M418.5,155.6V172.9M420.5,160.1V174.6M423.1,165.1V176.2M466.3,159.9V173.4M476.7,167.4V172.6M513.7,162.2V174.4M563.5,165.2V197.2M627.2,167.5V192.8M655.5,162.4V180.2M678.1,164.0V170.3M684.6,166.5V195.1M702.7,162.2V180.9M713.3,166.5V201.2M717.2,159.5V177.2M730.9,166.3V188.7M777.6,156.6V172.3M802.4,164.9V177.6M804.7,165.8V187.3M817.5,162.3V182.9M830.6,166.9V187.8M871.9,156.8V172.7M896.8,163.1V177.7M930.5,160.0V178.9M941.6,165.6V193.9M967.3,166.5V174.3M1001.6,167.6V195.1M1005.4,164.7V176.6M1014.3,162.9V176.0M1034.4,166.9V195.7M1109.7,164.4V176.6M1201.0,157.1V176.1" stroke="#28c4c2" stroke-width="1.4" opacity="0.9"/><path d="M63.5,167.3V172.9M68.8,166.0V171.7M86.7,164.9V173.5M92.1,167.0V170.5M94.7,167.2V171.3M97.6,164.2V173.0M107.8,167.3V173.1M111.4,164.3V171.1M117.5,165.0V170.1M137.5,166.6V171.6M153.5,165.6V170.2M161.2,166.8V170.0M163.1,164.3V170.1M166.8,164.9V170.9M192.8,165.5V171.7M196.4,165.7V172.0M203.3,164.0V173.3M209.1,164.9V170.1M213.0,166.6V173.3M224.8,163.6V169.9M231.0,166.5V170.1M236.7,165.0V172.7M238.4,167.2V173.0M245.6,166.3V171.5M252.4,165.9V171.5M255.8,166.1V172.8M259.2,165.9V170.9M262.6,164.0V172.2M267.0,163.6V171.7M269.2,166.3V170.9M278.0,165.9V170.8M286.0,164.6V172.7M291.0,164.8V172.3M296.1,165.0V172.2M308.5,164.4V172.0M320.1,163.8V169.6M322.9,163.6V171.3M328.0,167.0V172.8M330.9,164.7V170.4M340.6,167.0V173.2M344.1,166.3V171.0M346.6,165.1V170.9M357.4,164.3V172.0M361.4,165.3V172.4M363.0,165.7V172.5M368.5,163.6V170.5M395.4,164.4V171.3M414.3,164.5V171.5M416.4,166.3V172.8M425.6,164.0V172.4M429.8,166.2V170.2M433.9,167.4V172.2M453.3,166.1V170.6M457.4,166.5V172.4M470.0,164.2V172.6M480.8,163.5V170.6M485.2,164.8V172.5M488.9,167.0V172.9M493.2,165.2V170.8M495.7,165.5V170.4M499.4,163.5V169.9M502.2,164.1V173.2M524.5,166.3V171.8M544.9,165.9V173.1M548.0,166.9V172.6M557.6,166.3V171.2M575.9,164.6V172.8M577.9,165.5V173.3M588.3,166.7V170.6M597.5,165.3V171.8M603.6,165.2V170.9M610.4,165.2V172.2M615.6,167.0V170.4M622.9,166.5V170.1M624.6,164.0V172.6M643.4,167.5V172.9M654.0,166.6V173.0M657.9,166.2V170.5M661.9,164.7V172.2M676.3,163.8V173.3M681.3,165.0V170.6M694.1,166.8V169.5M696.1,163.6V169.5M709.1,166.1V171.1M711.7,167.2V173.1M726.7,166.5V170.3M729.0,164.1V170.1M732.9,164.6V169.9M750.6,164.7V172.9M753.9,165.7V170.8M773.5,165.4V171.1M784.4,166.1V170.6M786.5,163.7V171.6M788.6,165.9V170.3M790.4,164.3V172.0M796.9,165.6V170.7M815.6,166.5V169.9M825.1,164.1V170.3M842.7,166.2V173.4M848.0,166.0V171.4M851.0,166.7V171.2M860.5,164.0V171.7M865.4,163.9V171.9M868.5,164.7V171.9M877.6,165.3V170.5M893.3,167.0V169.6M900.2,164.6V169.8M903.4,165.7V173.2M905.6,164.6V169.5M907.1,164.2V169.8M909.4,166.8V172.9M914.2,166.0V172.1M922.8,163.6V172.8M929.0,164.3V170.6M932.1,164.3V173.0M943.8,164.3V171.3M945.6,164.4V170.4M948.6,164.0V171.6M956.2,164.4V170.1M965.7,163.6V170.5M973.0,166.5V171.8M976.2,164.8V171.1M984.6,163.6V169.7M986.4,163.7V172.2M1020.6,167.4V172.7M1025.6,166.6V171.8M1029.3,165.5V170.6M1031.3,164.7V172.7M1036.0,166.2V172.9M1048.6,164.0V170.8M1078.4,166.1V170.5M1087.2,166.0V171.6M1092.9,164.3V173.0M1099.8,165.0V170.5M1112.8,166.7V172.3M1133.2,165.4V172.5M1136.7,165.6V172.6M1140.1,167.0V173.0M1141.6,165.2V171.5M1155.7,166.2V172.9M1159.4,166.7V171.2M1176.3,165.6V171.3M1179.5,166.1V171.6M1185.0,164.7V172.8M1189.2,165.8V170.1M1193.9,165.0V169.7M1196.5,166.3V172.3M1218.7,164.2V170.7M1221.8,165.5V173.3" stroke="#2fb8b4" stroke-width="2" opacity="0.9"/><path d="M55.5,159.1V174.9M57.2,163.1V173.3M73.6,164.8V176.0M76.6,160.4V175.5M78.4,161.3V178.8M82.0,160.4V172.4M85.1,160.7V177.1M90.4,157.9V178.8M99.9,164.3V180.9M104.7,162.8V177.1M115.9,162.9V170.0M119.7,164.3V170.9M122.5,166.4V170.8M131.4,165.7V175.8M144.0,160.0V177.4M149.9,154.5V176.0M157.1,161.0V177.3M173.8,160.5V176.2M180.1,163.6V174.4M184.0,156.9V177.0M190.6,161.1V170.8M199.3,161.8V173.4M205.5,156.1V176.3M215.6,153.6V176.2M235.0,153.9V170.7M241.1,162.9V183.6M247.6,158.7V171.9M249.6,160.0V170.8M270.7,163.4V173.8M287.9,163.2V176.3M318.1,163.1V182.7M334.8,166.8V170.0M349.3,166.6V170.8M366.2,160.3V177.0M371.8,158.7V173.0M375.8,165.3V176.8M379.8,160.3V175.6M382.7,164.5V170.5M384.6,162.3V176.5M386.8,163.7V177.2M389.8,160.0V176.2M402.4,162.6V172.9M404.0,163.5V177.2M408.3,161.9V173.2M436.4,159.6V171.3M444.2,166.6V173.6M446.2,160.3V170.2M459.7,167.0V175.7M473.1,164.6V177.1M491.2,159.5V175.5M503.8,166.1V171.4M507.8,160.5V173.4M515.3,161.9V171.4M518.9,166.5V170.8M526.9,160.5V185.6M532.9,165.8V170.1M539.1,160.1V170.8M550.1,156.1V176.2M553.0,166.1V171.9M554.6,161.3V177.5M560.7,162.1V180.7M591.1,157.2V171.4M607.2,156.9V175.6M621.0,162.6V171.5M630.5,160.0V175.5M632.1,155.5V178.6M646.9,161.4V178.0M648.5,161.4V175.2M650.8,163.7V175.9M666.0,160.7V175.2M669.5,164.7V181.0M674.6,164.3V176.1M688.7,154.7V174.6M692.3,161.7V174.0M698.9,161.0V171.4M720.4,164.6V171.2M741.3,161.1V175.2M746.7,161.4V173.2M759.3,163.6V174.7M781.7,166.6V178.0M793.2,165.3V177.2M807.9,151.2V176.4M828.4,161.4V173.3M832.5,163.3V182.9M835.3,162.0V176.3M845.6,160.3V170.3M853.6,160.8V172.2M856.5,163.2V177.3M858.8,164.8V174.4M862.1,167.0V171.4M879.9,164.6V173.2M881.5,166.7V170.9M885.5,166.9V172.9M889.7,163.9V170.8M917.4,164.1V175.9M920.4,166.5V177.3M925.9,163.8V176.7M935.2,160.6V176.1M951.4,157.7V171.4M954.4,153.1V171.1M959.3,153.2V170.2M962.2,165.0V175.8M971.2,152.7V176.8M981.1,160.2V185.3M988.7,161.3V170.8M990.6,158.0V179.8M999.7,164.5V176.2M1039.9,166.9V176.8M1052.0,161.4V170.5M1054.9,153.2V174.0M1066.5,164.9V178.1M1074.3,163.8V176.3M1080.8,159.6V176.0M1088.9,153.4V170.2M1102.7,159.9V172.2M1104.5,159.8V173.9M1115.5,162.4V173.5M1117.6,158.7V174.4M1119.8,163.3V172.1M1125.9,161.5V170.8M1145.7,163.9V175.9M1148.2,163.6V175.4M1151.2,164.6V175.9M1167.0,159.5V173.9M1169.5,162.5V172.6M1191.5,155.8V171.4M1198.1,160.7V180.9M1205.6,160.8V177.7M1209.2,156.8V182.0M1212.3,154.4V172.9M1216.4,152.8V171.9M1224.0,161.6V171.7" stroke="#36d4d0" stroke-width="2" opacity="0.95"/><rect x="55" y="167.2" width="1170" height="2.6" fill="#44ece4"/><path d="M627.5,118.5 L653.5,118.5 L640.5,131.5 Z" fill="#000" stroke="#ff9010" stroke-width="1.5"/><path d="M627,134 H653 V155.5 L640,167 L627,155.5 Z" fill="#ff8a10"/><path d="M13,155.7 H44.8 L54.8,167.5 L44.8,179 H13 Z" fill="#18f0f8"/></svg><div class="t" style="left:627.5px;top:133.5px;width:24px;text-align:center;font-size:21px;color:#111;-webkit-text-stroke:0.4px #111">T</div><div class="t" style="left:20px;top:159px;width:18px;text-align:center;font-size:18px;color:#111">2</div><svg class="abs" style="left:1220px;top:150px" width="50" height="40"><path d="M47,5 H18 L5,18 L18,30 H47 Z" fill="#ff8a10"/></svg><div class="t" style="left:1237px;top:159px;width:28px;text-align:center;font-size:18px;color:#111">T</div><svg class="abs" style="left:0;top:0" width="1280" height="640"><line x1="87" y1="283.0" x2="1191" y2="283.0" stroke="#000" stroke-width="4" stroke-dasharray="5 0"/><line x1="87" y1="283.0" x2="1191" y2="283.0" stroke="#dcdcdc" stroke-width="2" stroke-dasharray="3 2"/><line x1="87" y1="320.8" x2="1191" y2="320.8" stroke="#000" stroke-width="4" stroke-dasharray="5 0"/><line x1="87" y1="320.8" x2="1191" y2="320.8" stroke="#dcdcdc" stroke-width="2" stroke-dasharray="3 2"/><line x1="87" y1="358.5" x2="1191" y2="358.5" stroke="#000" stroke-width="4" stroke-dasharray="5 0"/><line x1="87" y1="358.5" x2="1191" y2="358.5" stroke="#dcdcdc" stroke-width="2" stroke-dasharray="3 2"/><line x1="87" y1="396.2" x2="1191" y2="396.2" stroke="#000" stroke-width="4" stroke-dasharray="5 0"/><line x1="87" y1="396.2" x2="1191" y2="396.2" stroke="#dcdcdc" stroke-width="2" stroke-dasharray="3 2"/><line x1="87" y1="434.0" x2="1191" y2="434.0" stroke="#000" stroke-width="4" stroke-dasharray="5 0"/><line x1="87" y1="434.0" x2="1191" y2="434.0" stroke="#dcdcdc" stroke-width="2" stroke-dasharray="3 2"/><line x1="87" y1="471.8" x2="1191" y2="471.8" stroke="#000" stroke-width="4" stroke-dasharray="5 0"/><line x1="87" y1="471.8" x2="1191" y2="471.8" stroke="#dcdcdc" stroke-width="2" stroke-dasharray="3 2"/><line x1="87" y1="509.5" x2="1191" y2="509.5" stroke="#000" stroke-width="4" stroke-dasharray="5 0"/><line x1="87" y1="509.5" x2="1191" y2="509.5" stroke="#dcdcdc" stroke-width="2" stroke-dasharray="3 2"/><line x1="87" y1="547.2" x2="1191" y2="547.2" stroke="#000" stroke-width="4" stroke-dasharray="5 0"/><line x1="87" y1="547.2" x2="1191" y2="547.2" stroke="#dcdcdc" stroke-width="2" stroke-dasharray="3 2"/><line x1="87" y1="585.0" x2="1191" y2="585.0" stroke="#000" stroke-width="4" stroke-dasharray="5 0"/><line x1="87" y1="585.0" x2="1191" y2="585.0" stroke="#dcdcdc" stroke-width="2" stroke-dasharray="3 2"/><path d="M188.4,358.5 C189.3,358.8 190.7,358.5 194.0,360.3 C197.3,362.1 202.7,365.9 208.0,369.2 C213.3,372.5 219.6,377.0 225.8,380.4 C232.0,383.8 238.2,386.8 245.4,389.8 C252.6,392.8 256.8,394.2 268.7,398.2 C280.6,402.2 301.1,409.5 316.9,413.8 C332.7,418.0 348.1,420.9 363.8,423.9 C379.4,426.9 397.3,429.5 410.6,431.7 C423.9,433.9 437.9,436.3 443.4,437.2 C445.8,438.9 449.4,441.5 458.0,447.2 C466.6,452.9 481.8,463.2 495.2,471.2 C508.6,479.2 526.0,488.2 538.4,495.2 C550.8,502.2 557.2,507.3 569.6,513.2 C582.0,519.1 605.6,527.8 612.8,530.7 C618.0,531.6 630.0,533.5 644.0,536.0 C658.0,538.5 685.1,542.8 696.8,545.6 C708.5,548.4 711.1,551.8 714.0,553.0 C716.0,553.2 720.7,554.0 726.0,554.0 C731.3,554.0 739.7,552.7 746.0,553.0 C752.3,553.3 756.7,554.8 764.0,555.6 C771.3,556.4 781.0,556.8 790.0,558.0 C799.0,559.2 808.0,561.8 818.0,563.0 C828.0,564.2 839.7,564.3 850.0,565.0 C860.3,565.7 869.2,566.2 880.0,567.0 C890.8,567.8 909.2,569.5 915.0,570.0" fill="none" stroke="#c4201c" stroke-width="1.6" stroke-linejoin="round"/><path d="M187.5,338.9 C188.6,339.8 190.8,340.5 194.0,344.0 C197.2,347.5 201.7,354.5 207.0,359.9 C212.3,365.3 220.2,372.4 225.8,376.2 C231.4,380.0 235.9,381.2 240.7,382.8 C245.5,384.4 248.1,385.1 254.7,386.0 C261.2,386.9 269.6,387.9 280.0,388.4 C290.4,388.9 302.9,388.9 316.9,389.0 C330.9,389.1 348.1,388.8 363.8,389.0 C379.4,389.2 397.1,389.6 410.6,390.3 C424.1,391.0 438.1,392.4 445.0,393.4 C451.9,394.4 448.0,395.6 452.0,396.3 C456.0,397.0 458.4,394.9 468.8,397.3 C479.2,399.7 502.4,407.9 514.4,410.5 C526.4,413.1 531.2,412.3 540.8,413.1 C550.4,413.9 554.0,411.8 572.0,415.3 C590.0,418.8 633.4,430.3 648.8,434.0 C664.2,437.7 656.6,433.7 664.4,437.6 C672.2,441.5 690.4,454.0 695.6,457.3 C696.7,460.2 698.9,466.6 702.0,475.0 C705.1,483.4 709.8,498.5 714.0,508.0 C718.2,517.5 722.3,525.2 727.0,532.0 C731.7,538.8 735.8,544.2 742.0,549.0 C748.2,553.8 756.0,557.9 764.0,561.0 C772.0,564.1 779.0,565.8 790.0,567.4 C801.0,569.0 818.3,569.7 830.0,570.4 C841.7,571.1 845.8,571.6 860.0,571.6 C874.2,571.6 905.8,570.6 915.0,570.4" fill="none" stroke="#26b826" stroke-width="1.6" stroke-linejoin="round"/></svg><div class="t" style="left:48px;top:243.7px;font-size:18.3px;color:#d6d6d6">Freq=10kHz</div><div class="t" style="left:167px;top:243.7px;font-size:18.3px;color:#ea2620">Gain=-54.19dB</div><div class="t" style="left:306px;top:243.7px;font-size:18.3px;color:#1f9c1f">Phase=-163.30&deg;</div><div class="t" style="left:49.3px;top:270.4px;font-size:15.6px;transform:scaleX(0.94);transform-origin:0 0;color:#dc2a28">60dB</div><div class="t" style="left:1193px;top:270.4px;font-size:15.6px;transform:scaleX(0.94);transform-origin:0 0;color:#46d646">180&deg;</div><div class="t" style="left:49.3px;top:308.1px;font-size:15.6px;transform:scaleX(0.94);transform-origin:0 0;color:#dc2a28">45</div><div class="t" style="left:1193px;top:308.1px;font-size:15.6px;transform:scaleX(0.94);transform-origin:0 0;color:#46d646">135</div><div class="t" style="left:49.3px;top:345.9px;font-size:15.6px;transform:scaleX(0.94);transform-origin:0 0;color:#dc2a28">30</div><div class="t" style="left:1193px;top:345.9px;font-size:15.6px;transform:scaleX(0.94);transform-origin:0 0;color:#46d646">90</div><div class="t" style="left:49.3px;top:383.6px;font-size:15.6px;transform:scaleX(0.94);transform-origin:0 0;color:#dc2a28">15</div><div class="t" style="left:1193px;top:383.6px;font-size:15.6px;transform:scaleX(0.94);transform-origin:0 0;color:#46d646">45</div><div class="t" style="left:49.3px;top:421.4px;font-size:15.6px;transform:scaleX(0.94);transform-origin:0 0;color:#dc2a28">0</div><div class="t" style="left:1193px;top:421.4px;font-size:15.6px;transform:scaleX(0.94);transform-origin:0 0;color:#46d646">0</div><div class="t" style="left:49.3px;top:459.1px;font-size:15.6px;transform:scaleX(0.94);transform-origin:0 0;color:#dc2a28">-15</div><div class="t" style="left:1193px;top:459.1px;font-size:15.6px;transform:scaleX(0.94);transform-origin:0 0;color:#46d646">-45</div><div class="t" style="left:49.3px;top:496.9px;font-size:15.6px;transform:scaleX(0.94);transform-origin:0 0;color:#dc2a28">-30</div><div class="t" style="left:1193px;top:496.9px;font-size:15.6px;transform:scaleX(0.94);transform-origin:0 0;color:#46d646">-90</div><div class="t" style="left:49.3px;top:534.6px;font-size:15.6px;transform:scaleX(0.94);transform-origin:0 0;color:#dc2a28">-45</div><div class="t" style="left:1193px;top:534.6px;font-size:15.6px;transform:scaleX(0.94);transform-origin:0 0;color:#46d646">-135</div><div class="t" style="left:49.3px;top:572.4px;font-size:15.6px;transform:scaleX(0.94);transform-origin:0 0;color:#dc2a28">-60</div><div class="t" style="left:1193px;top:572.4px;font-size:15.6px;transform:scaleX(0.94);transform-origin:0 0;color:#46d646">-180</div><div class="t" style="left:137px;top:593px;font-size:19px;color:#eeeeee">10Hz</div><div class="t" style="left:388px;top:593px;font-size:19px;color:#eeeeee">100Hz</div><div class="t" style="left:639px;top:593px;font-size:19px;color:#eeeeee">1kHz</div><div class="t" style="left:890px;top:593px;font-size:19px;color:#eeeeee">10kHz</div><svg class="abs" style="left:1200px;top:580px" width="60" height="45"><rect x="6.3" y="9" width="31.8" height="4.5" fill="#f4f4f4"/><rect x="6.3" y="21.3" width="24.3" height="4.5" fill="#f4f4f4"/><rect x="6.3" y="33.9" width="31.8" height="4.5" fill="#f4f4f4"/><path d="M48.3,13.8 L38.8,23.7 L48.3,33.6" fill="none" stroke="#f4f4f4" stroke-width="4.3"/></svg><div class="abs" style="left:742.5px;top:306px;width:275px;height:139px;border-radius:8px;overflow:hidden;background:rgba(30,37,40,0.93)"><div class="abs" style="left:0;top:0;width:275px;height:38px;background:#545d62"></div><div class="t" style="left:16px;top:11px;font-size:16.6px;font-weight:bold;color:#dcdcdc">Bode Result</div><svg class="abs" style="left:246px;top:10px" width="22" height="22"><path d="M3,3 L19,19 M19,3 L3,19" stroke="#d8d8d8" stroke-width="2"/></svg><div class="t" style="left:16px;top:55px;font-size:15.6px;color:#cdcdcd">PM(0dB)</div><div class="t" style="left:162px;top:55px;font-size:15.6px;color:#cdcdcd">GM(&deg;)</div><div class="t" style="left:16px;top:86px;font-size:15.6px;color:#cdcdcd">Freq:</div><div class="t" style="left:83px;top:86px;font-size:15.6px;color:#cdcdcd">112.9Hz</div><div class="t" style="left:162px;top:86px;font-size:15.6px;color:#cdcdcd">Freq:897.1Hz</div><div class="t" style="left:16px;top:121px;font-size:15.6px;color:#cdcdcd">Phase:</div><div class="t" style="left:82px;top:121px;font-size:15.6px;color:#cdcdcd">49.83&deg;</div><div class="t" style="left:161px;top:121px;font-size:15.6px;color:#cdcdcd">Gain:-40.18dB</div></div><div class="abs" style="left:9px;top:647px;width:103px;height:94px;border-radius:8px;background:#000"></div><svg class="abs" style="left:0;top:640px" width="120" height="110"><defs><linearGradient id="gg" x1="0" y1="0" x2="1" y2="1"><stop offset="0" stop-color="#e6e6e6"/><stop offset="0.45" stop-color="#9c9c9c"/><stop offset="0.6" stop-color="#b8b8b8"/><stop offset="1" stop-color="#e8e8e8"/></linearGradient><radialGradient id="gi"><stop offset="0" stop-color="#46403c"/><stop offset="1" stop-color="#272220"/></radialGradient><linearGradient id="rg" x1="0" y1="0" x2="1" y2="1"><stop offset="0" stop-color="#c8c8c8"/><stop offset="0.5" stop-color="#8c8c8c"/><stop offset="1" stop-color="#bdbdbd"/></linearGradient><pattern id="rpat" x="0" y="0" width="4" height="4" patternUnits="userSpaceOnUse"><circle cx="2" cy="2" r="1.1" fill="#2a2a2a" opacity="0.55"/></pattern></defs><g transform="translate(0,-640)"><path d="M103.3,693.6 L103.3,694.0 L103.3,694.4 L103.3,694.7 L103.3,695.1 L103.3,695.5 L103.2,695.9 L103.2,696.2 L103.2,696.6 L103.2,697.0 L103.1,697.4 L103.1,697.8 L103.1,698.1 L103.0,698.5 L103.0,698.9 L102.9,699.3 L102.9,699.6 L102.8,700.0 L102.8,700.4 L102.7,700.7 L102.6,701.1 L102.6,701.5 L102.5,701.9 L102.4,702.2 L102.4,702.6 L102.3,703.0 L102.2,703.3 L102.1,703.7 L102.0,704.1 L101.9,704.4 L101.8,704.8 L101.7,705.2 L101.6,705.5 L101.5,705.9 L101.4,706.3 L101.4,706.4 L101.4,706.4 L101.4,706.4 L101.4,706.4 L101.4,706.4 L101.4,706.4 L101.4,706.4 L101.4,706.4 L101.4,706.4 L101.4,706.4 L101.3,706.3 L101.3,706.3 L101.2,706.3 L101.2,706.3 L101.1,706.3 L101.0,706.2 L100.8,706.2 L100.7,706.1 L100.4,706.1 L100.1,706.0 L99.6,705.9 L98.8,705.8 L97.7,705.8 L95.9,706.1 L93.0,707.3 L89.6,710.7 L88.3,715.3 L88.7,718.5 L89.4,720.2 L90.0,721.1 L90.4,721.7 L90.8,722.1 L91.0,722.4 L91.2,722.5 L91.3,722.7 L91.4,722.8 L91.5,722.9 L91.6,722.9 L91.6,723.0 L91.7,723.0 L91.7,723.0 L91.7,723.0 L91.8,723.1 L91.8,723.1 L91.8,723.1 L91.8,723.1 L91.8,723.1 L91.8,723.1 L91.8,723.1 L91.8,723.1 L91.7,723.1 L91.7,723.1 L91.4,723.4 L91.1,723.7 L90.9,723.9 L90.6,724.2 L90.3,724.5 L90.1,724.7 L89.8,725.0 L89.5,725.3 L89.3,725.5 L89.0,725.8 L88.7,726.0 L88.4,726.3 L88.1,726.5 L87.8,726.8 L87.5,727.0 L87.2,727.3 L87.0,727.5 L86.7,727.7 L86.4,728.0 L86.1,728.2 L85.8,728.4 L85.5,728.6 L85.1,728.9 L84.8,729.1 L84.5,729.3 L84.2,729.5 L83.9,729.7 L83.6,729.9 L83.3,730.1 L82.9,730.3 L82.6,730.5 L82.3,730.7 L82.0,730.9 L81.7,731.1 L81.3,731.3 L81.0,731.5 L80.7,731.7 L80.3,731.8 L80.0,732.0 L79.7,732.2 L79.3,732.4 L79.0,732.5 L78.6,732.7 L78.3,732.8 L78.0,733.0 L77.6,733.2 L77.3,733.3 L76.9,733.5 L76.6,733.6 L76.2,733.7 L75.9,733.9 L75.5,734.0 L75.2,734.2 L74.8,734.3 L74.5,734.4 L74.1,734.5 L73.7,734.7 L73.4,734.8 L73.0,734.9 L72.7,735.0 L72.3,735.1 L71.9,735.2 L71.6,735.3 L71.2,735.4 L70.8,735.5 L70.5,735.6 L70.1,735.7 L69.7,735.8 L69.6,735.8 L69.6,735.8 L69.6,735.8 L69.6,735.9 L69.6,735.9 L69.6,735.9 L69.6,735.9 L69.6,735.8 L69.6,735.8 L69.6,735.8 L69.6,735.8 L69.6,735.7 L69.6,735.7 L69.6,735.6 L69.6,735.5 L69.6,735.4 L69.5,735.3 L69.5,735.1 L69.4,734.8 L69.3,734.5 L69.1,734.0 L68.8,733.4 L68.3,732.4 L67.2,730.9 L64.6,729.0 L60.0,727.8 L55.4,729.0 L52.8,730.9 L51.7,732.4 L51.2,733.4 L50.9,734.0 L50.7,734.5 L50.6,734.8 L50.5,735.1 L50.5,735.3 L50.4,735.4 L50.4,735.5 L50.4,735.6 L50.4,735.7 L50.4,735.7 L50.4,735.8 L50.4,735.8 L50.4,735.8 L50.4,735.8 L50.4,735.9 L50.4,735.9 L50.4,735.9 L50.4,735.9 L50.4,735.8 L50.4,735.8 L50.4,735.8 L50.3,735.8 L49.9,735.7 L49.5,735.6 L49.2,735.5 L48.8,735.4 L48.4,735.3 L48.1,735.2 L47.7,735.1 L47.3,735.0 L47.0,734.9 L46.6,734.8 L46.3,734.7 L45.9,734.5 L45.5,734.4 L45.2,734.3 L44.8,734.2 L44.5,734.0 L44.1,733.9 L43.8,733.7 L43.4,733.6 L43.1,733.5 L42.7,733.3 L42.4,733.2 L42.0,733.0 L41.7,732.8 L41.4,732.7 L41.0,732.5 L40.7,732.4 L40.3,732.2 L40.0,732.0 L39.7,731.8 L39.3,731.7 L39.0,731.5 L38.7,731.3 L38.4,731.1 L38.0,730.9 L37.7,730.7 L37.4,730.5 L37.1,730.3 L36.7,730.1 L36.4,729.9 L36.1,729.7 L35.8,729.5 L35.5,729.3 L35.2,729.1 L34.9,728.9 L34.5,728.6 L34.2,728.4 L33.9,728.2 L33.6,728.0 L33.3,727.7 L33.0,727.5 L32.8,727.3 L32.5,727.0 L32.2,726.8 L31.9,726.5 L31.6,726.3 L31.3,726.0 L31.0,725.8 L30.7,725.5 L30.5,725.3 L30.2,725.0 L29.9,724.7 L29.7,724.5 L29.4,724.2 L29.1,723.9 L28.9,723.7 L28.6,723.4 L28.3,723.1 L28.3,723.1 L28.2,723.1 L28.2,723.1 L28.2,723.1 L28.2,723.1 L28.2,723.1 L28.2,723.1 L28.2,723.1 L28.2,723.1 L28.3,723.0 L28.3,723.0 L28.3,723.0 L28.4,723.0 L28.4,722.9 L28.5,722.9 L28.6,722.8 L28.7,722.7 L28.8,722.5 L29.0,722.4 L29.2,722.1 L29.6,721.7 L30.0,721.1 L30.6,720.2 L31.3,718.5 L31.7,715.3 L30.4,710.7 L27.0,707.3 L24.1,706.1 L22.3,705.8 L21.2,705.8 L20.4,705.9 L19.9,706.0 L19.6,706.1 L19.3,706.1 L19.2,706.2 L19.0,706.2 L18.9,706.3 L18.8,706.3 L18.8,706.3 L18.7,706.3 L18.7,706.3 L18.6,706.4 L18.6,706.4 L18.6,706.4 L18.6,706.4 L18.6,706.4 L18.6,706.4 L18.6,706.4 L18.6,706.4 L18.6,706.4 L18.6,706.4 L18.6,706.3 L18.5,705.9 L18.4,705.5 L18.3,705.2 L18.2,704.8 L18.1,704.4 L18.0,704.1 L17.9,703.7 L17.8,703.3 L17.7,703.0 L17.6,702.6 L17.6,702.2 L17.5,701.9 L17.4,701.5 L17.4,701.1 L17.3,700.7 L17.2,700.4 L17.2,700.0 L17.1,699.6 L17.1,699.3 L17.0,698.9 L17.0,698.5 L16.9,698.1 L16.9,697.8 L16.9,697.4 L16.8,697.0 L16.8,696.6 L16.8,696.2 L16.8,695.9 L16.7,695.5 L16.7,695.1 L16.7,694.7 L16.7,694.4 L16.7,694.0 L16.7,693.6 L16.7,693.2 L16.7,692.8 L16.7,692.5 L16.7,692.1 L16.7,691.7 L16.8,691.3 L16.8,691.0 L16.8,690.6 L16.8,690.2 L16.9,689.8 L16.9,689.4 L16.9,689.1 L17.0,688.7 L17.0,688.3 L17.1,687.9 L17.1,687.6 L17.2,687.2 L17.2,686.8 L17.3,686.5 L17.4,686.1 L17.4,685.7 L17.5,685.3 L17.6,685.0 L17.6,684.6 L17.7,684.2 L17.8,683.9 L17.9,683.5 L18.0,683.1 L18.1,682.8 L18.2,682.4 L18.3,682.0 L18.4,681.7 L18.5,681.3 L18.6,680.9 L18.6,680.8 L18.6,680.8 L18.6,680.8 L18.6,680.8 L18.6,680.8 L18.6,680.8 L18.6,680.8 L18.6,680.8 L18.6,680.8 L18.6,680.8 L18.7,680.9 L18.7,680.9 L18.8,680.9 L18.8,680.9 L18.9,680.9 L19.0,681.0 L19.2,681.0 L19.3,681.1 L19.6,681.1 L19.9,681.2 L20.4,681.3 L21.2,681.4 L22.3,681.4 L24.1,681.1 L27.0,679.9 L30.4,676.5 L31.7,671.9 L31.3,668.7 L30.6,667.0 L30.0,666.1 L29.6,665.5 L29.2,665.1 L29.0,664.8 L28.8,664.7 L28.7,664.5 L28.6,664.4 L28.5,664.3 L28.4,664.3 L28.4,664.2 L28.3,664.2 L28.3,664.2 L28.3,664.2 L28.2,664.1 L28.2,664.1 L28.2,664.1 L28.2,664.1 L28.2,664.1 L28.2,664.1 L28.2,664.1 L28.2,664.1 L28.3,664.1 L28.3,664.1 L28.6,663.8 L28.9,663.5 L29.1,663.3 L29.4,663.0 L29.7,662.7 L29.9,662.5 L30.2,662.2 L30.5,661.9 L30.7,661.7 L31.0,661.4 L31.3,661.2 L31.6,660.9 L31.9,660.7 L32.2,660.4 L32.5,660.2 L32.8,659.9 L33.0,659.7 L33.3,659.5 L33.6,659.2 L33.9,659.0 L34.2,658.8 L34.5,658.6 L34.9,658.3 L35.2,658.1 L35.5,657.9 L35.8,657.7 L36.1,657.5 L36.4,657.3 L36.7,657.1 L37.1,656.9 L37.4,656.7 L37.7,656.5 L38.0,656.3 L38.3,656.1 L38.7,655.9 L39.0,655.7 L39.3,655.5 L39.7,655.4 L40.0,655.2 L40.3,655.0 L40.7,654.8 L41.0,654.7 L41.4,654.5 L41.7,654.4 L42.0,654.2 L42.4,654.0 L42.7,653.9 L43.1,653.7 L43.4,653.6 L43.8,653.5 L44.1,653.3 L44.5,653.2 L44.8,653.0 L45.2,652.9 L45.5,652.8 L45.9,652.7 L46.3,652.5 L46.6,652.4 L47.0,652.3 L47.3,652.2 L47.7,652.1 L48.1,652.0 L48.4,651.9 L48.8,651.8 L49.2,651.7 L49.5,651.6 L49.9,651.5 L50.3,651.4 L50.4,651.4 L50.4,651.4 L50.4,651.4 L50.4,651.3 L50.4,651.3 L50.4,651.3 L50.4,651.3 L50.4,651.4 L50.4,651.4 L50.4,651.4 L50.4,651.4 L50.4,651.5 L50.4,651.5 L50.4,651.6 L50.4,651.7 L50.4,651.8 L50.5,651.9 L50.5,652.1 L50.6,652.4 L50.7,652.7 L50.9,653.2 L51.2,653.8 L51.7,654.8 L52.8,656.3 L55.4,658.2 L60.0,659.4 L64.6,658.2 L67.2,656.3 L68.3,654.8 L68.8,653.8 L69.1,653.2 L69.3,652.7 L69.4,652.4 L69.5,652.1 L69.5,651.9 L69.6,651.8 L69.6,651.7 L69.6,651.6 L69.6,651.5 L69.6,651.5 L69.6,651.4 L69.6,651.4 L69.6,651.4 L69.6,651.4 L69.6,651.3 L69.6,651.3 L69.6,651.3 L69.6,651.3 L69.6,651.4 L69.6,651.4 L69.6,651.4 L69.7,651.4 L70.1,651.5 L70.5,651.6 L70.8,651.7 L71.2,651.8 L71.6,651.9 L71.9,652.0 L72.3,652.1 L72.7,652.2 L73.0,652.3 L73.4,652.4 L73.7,652.5 L74.1,652.7 L74.5,652.8 L74.8,652.9 L75.2,653.0 L75.5,653.2 L75.9,653.3 L76.2,653.5 L76.6,653.6 L76.9,653.7 L77.3,653.9 L77.6,654.0 L78.0,654.2 L78.3,654.4 L78.6,654.5 L79.0,654.7 L79.3,654.8 L79.7,655.0 L80.0,655.2 L80.3,655.4 L80.7,655.5 L81.0,655.7 L81.3,655.9 L81.7,656.1 L82.0,656.3 L82.3,656.5 L82.6,656.7 L82.9,656.9 L83.3,657.1 L83.6,657.3 L83.9,657.5 L84.2,657.7 L84.5,657.9 L84.8,658.1 L85.1,658.3 L85.5,658.6 L85.8,658.8 L86.1,659.0 L86.4,659.2 L86.7,659.5 L87.0,659.7 L87.2,659.9 L87.5,660.2 L87.8,660.4 L88.1,660.7 L88.4,660.9 L88.7,661.2 L89.0,661.4 L89.3,661.7 L89.5,661.9 L89.8,662.2 L90.1,662.5 L90.3,662.7 L90.6,663.0 L90.9,663.3 L91.1,663.5 L91.4,663.8 L91.7,664.1 L91.7,664.1 L91.8,664.1 L91.8,664.1 L91.8,664.1 L91.8,664.1 L91.8,664.1 L91.8,664.1 L91.8,664.1 L91.8,664.1 L91.7,664.2 L91.7,664.2 L91.7,664.2 L91.6,664.2 L91.6,664.3 L91.5,664.3 L91.4,664.4 L91.3,664.5 L91.2,664.7 L91.0,664.8 L90.8,665.1 L90.4,665.5 L90.0,666.1 L89.4,667.0 L88.7,668.7 L88.3,671.9 L89.6,676.5 L93.0,679.9 L95.9,681.1 L97.7,681.4 L98.8,681.4 L99.6,681.3 L100.1,681.2 L100.4,681.1 L100.7,681.1 L100.8,681.0 L101.0,681.0 L101.1,680.9 L101.2,680.9 L101.2,680.9 L101.3,680.9 L101.3,680.9 L101.4,680.8 L101.4,680.8 L101.4,680.8 L101.4,680.8 L101.4,680.8 L101.4,680.8 L101.4,680.8 L101.4,680.8 L101.4,680.8 L101.4,680.8 L101.4,680.9 L101.5,681.3 L101.6,681.7 L101.7,682.0 L101.8,682.4 L101.9,682.8 L102.0,683.1 L102.1,683.5 L102.2,683.9 L102.3,684.2 L102.4,684.6 L102.4,685.0 L102.5,685.3 L102.6,685.7 L102.6,686.1 L102.7,686.5 L102.8,686.8 L102.8,687.2 L102.9,687.6 L102.9,687.9 L103.0,688.3 L103.0,688.7 L103.1,689.1 L103.1,689.4 L103.1,689.8 L103.2,690.2 L103.2,690.6 L103.2,691.0 L103.2,691.3 L103.3,691.7 L103.3,692.1 L103.3,692.5 L103.3,692.8 L103.3,693.2Z" fill="url(#gg)"/><path d="M94.0,693.6 L94.0,693.9 L94.0,694.2 L94.0,694.5 L94.0,694.8 L94.0,695.1 L94.0,695.4 L93.9,695.7 L93.9,696.0 L93.9,696.3 L93.9,696.6 L93.8,696.9 L93.8,697.2 L93.8,697.4 L93.7,697.7 L93.7,698.0 L93.7,698.3 L93.6,698.6 L93.6,698.9 L93.5,699.2 L93.5,699.5 L93.4,699.8 L93.4,700.1 L93.3,700.4 L93.3,700.7 L93.2,701.0 L93.1,701.2 L93.0,701.5 L92.9,701.5 L92.7,701.6 L92.5,701.7 L92.4,701.7 L92.2,701.8 L92.0,701.9 L91.8,702.0 L91.6,702.1 L91.4,702.2 L91.2,702.3 L90.9,702.4 L90.7,702.6 L90.4,702.7 L90.2,702.9 L89.9,703.0 L89.7,703.2 L89.4,703.4 L89.1,703.6 L88.9,703.8 L88.6,704.0 L88.3,704.2 L88.0,704.5 L87.7,704.8 L87.5,705.0 L87.2,705.3 L86.9,705.6 L86.6,705.9 L86.4,706.3 L86.1,706.6 L85.8,707.0 L85.6,707.3 L85.3,707.7 L85.1,708.1 L84.9,708.5 L84.7,708.9 L84.5,709.3 L84.3,709.7 L84.2,710.1 L84.0,710.5 L83.9,710.9 L83.7,711.3 L83.6,711.7 L83.5,712.0 L83.4,712.4 L83.4,712.8 L83.3,713.2 L83.3,713.5 L83.2,713.9 L83.2,714.2 L83.1,714.5 L83.1,714.8 L83.1,715.1 L83.1,715.4 L83.1,715.7 L83.1,716.0 L83.1,716.2 L83.1,716.5 L83.1,716.7 L83.2,716.9 L83.2,717.2 L83.2,717.4 L83.2,717.6 L83.3,717.8 L83.3,717.9 L83.3,718.1 L83.3,718.3 L83.2,718.5 L83.0,718.7 L82.8,718.9 L82.5,719.1 L82.3,719.3 L82.1,719.5 L81.9,719.6 L81.6,719.8 L81.4,720.0 L81.2,720.2 L80.9,720.4 L80.7,720.6 L80.5,720.8 L80.2,720.9 L80.0,721.1 L79.7,721.3 L79.5,721.5 L79.3,721.6 L79.0,721.8 L78.8,722.0 L78.5,722.1 L78.3,722.3 L78.0,722.4 L77.8,722.6 L77.5,722.7 L77.3,722.9 L77.0,723.0 L76.7,723.2 L76.5,723.3 L76.2,723.5 L76.0,723.6 L75.7,723.8 L75.4,723.9 L75.2,724.0 L74.9,724.2 L74.6,724.3 L74.4,724.4 L74.1,724.5 L73.8,724.7 L73.6,724.8 L73.3,724.9 L73.0,725.0 L72.7,725.1 L72.5,725.2 L72.2,725.3 L71.9,725.4 L71.6,725.5 L71.3,725.6 L71.1,725.7 L70.8,725.8 L70.5,725.9 L70.2,726.0 L69.9,726.1 L69.7,726.2 L69.6,726.0 L69.4,725.9 L69.3,725.8 L69.1,725.7 L69.0,725.6 L68.8,725.5 L68.6,725.3 L68.4,725.2 L68.2,725.1 L68.0,724.9 L67.8,724.8 L67.6,724.7 L67.3,724.5 L67.1,724.4 L66.8,724.2 L66.5,724.1 L66.2,724.0 L65.9,723.8 L65.6,723.7 L65.3,723.6 L64.9,723.4 L64.6,723.3 L64.2,723.2 L63.8,723.1 L63.4,723.0 L63.0,722.9 L62.6,722.8 L62.2,722.8 L61.8,722.7 L61.3,722.7 L60.9,722.6 L60.4,722.6 L60.0,722.6 L59.6,722.6 L59.1,722.6 L58.7,722.7 L58.2,722.7 L57.8,722.8 L57.4,722.8 L57.0,722.9 L56.6,723.0 L56.2,723.1 L55.8,723.2 L55.4,723.3 L55.1,723.4 L54.7,723.6 L54.4,723.7 L54.1,723.8 L53.8,724.0 L53.5,724.1 L53.2,724.2 L52.9,724.4 L52.7,724.5 L52.4,724.7 L52.2,724.8 L52.0,724.9 L51.8,725.1 L51.6,725.2 L51.4,725.3 L51.2,725.5 L51.0,725.6 L50.9,725.7 L50.7,725.8 L50.6,725.9 L50.4,726.0 L50.3,726.2 L50.1,726.1 L49.8,726.0 L49.5,725.9 L49.2,725.8 L48.9,725.7 L48.7,725.6 L48.4,725.5 L48.1,725.4 L47.8,725.3 L47.5,725.2 L47.3,725.1 L47.0,725.0 L46.7,724.9 L46.4,724.8 L46.2,724.7 L45.9,724.5 L45.6,724.4 L45.4,724.3 L45.1,724.2 L44.8,724.0 L44.6,723.9 L44.3,723.8 L44.0,723.6 L43.8,723.5 L43.5,723.3 L43.3,723.2 L43.0,723.0 L42.7,722.9 L42.5,722.7 L42.2,722.6 L42.0,722.4 L41.7,722.3 L41.5,722.1 L41.2,722.0 L41.0,721.8 L40.7,721.6 L40.5,721.5 L40.3,721.3 L40.0,721.1 L39.8,720.9 L39.5,720.8 L39.3,720.6 L39.1,720.4 L38.8,720.2 L38.6,720.0 L38.4,719.8 L38.1,719.6 L37.9,719.5 L37.7,719.3 L37.5,719.1 L37.2,718.9 L37.0,718.7 L36.8,718.5 L36.7,718.3 L36.7,718.1 L36.7,717.9 L36.7,717.8 L36.8,717.6 L36.8,717.4 L36.8,717.2 L36.8,716.9 L36.9,716.7 L36.9,716.5 L36.9,716.2 L36.9,716.0 L36.9,715.7 L36.9,715.4 L36.9,715.1 L36.9,714.8 L36.9,714.5 L36.8,714.2 L36.8,713.9 L36.7,713.5 L36.7,713.2 L36.6,712.8 L36.6,712.4 L36.5,712.0 L36.4,711.7 L36.3,711.3 L36.1,710.9 L36.0,710.5 L35.8,710.1 L35.7,709.7 L35.5,709.3 L35.3,708.9 L35.1,708.5 L34.9,708.1 L34.7,707.7 L34.4,707.3 L34.2,707.0 L33.9,706.6 L33.6,706.3 L33.4,705.9 L33.1,705.6 L32.8,705.3 L32.5,705.0 L32.3,704.8 L32.0,704.5 L31.7,704.2 L31.4,704.0 L31.1,703.8 L30.9,703.6 L30.6,703.4 L30.3,703.2 L30.1,703.0 L29.8,702.9 L29.6,702.7 L29.3,702.6 L29.1,702.4 L28.8,702.3 L28.6,702.2 L28.4,702.1 L28.2,702.0 L28.0,701.9 L27.8,701.8 L27.6,701.7 L27.5,701.7 L27.3,701.6 L27.1,701.5 L27.0,701.5 L26.9,701.2 L26.8,701.0 L26.7,700.7 L26.7,700.4 L26.6,700.1 L26.6,699.8 L26.5,699.5 L26.5,699.2 L26.4,698.9 L26.4,698.6 L26.3,698.3 L26.3,698.0 L26.3,697.7 L26.2,697.4 L26.2,697.2 L26.2,696.9 L26.1,696.6 L26.1,696.3 L26.1,696.0 L26.1,695.7 L26.0,695.4 L26.0,695.1 L26.0,694.8 L26.0,694.5 L26.0,694.2 L26.0,693.9 L26.0,693.6 L26.0,693.3 L26.0,693.0 L26.0,692.7 L26.0,692.4 L26.0,692.1 L26.0,691.8 L26.1,691.5 L26.1,691.2 L26.1,690.9 L26.1,690.6 L26.2,690.3 L26.2,690.0 L26.2,689.8 L26.3,689.5 L26.3,689.2 L26.3,688.9 L26.4,688.6 L26.4,688.3 L26.5,688.0 L26.5,687.7 L26.6,687.4 L26.6,687.1 L26.7,686.8 L26.7,686.5 L26.8,686.2 L26.9,686.0 L27.0,685.7 L27.1,685.7 L27.3,685.6 L27.5,685.5 L27.6,685.5 L27.8,685.4 L28.0,685.3 L28.2,685.2 L28.4,685.1 L28.6,685.0 L28.8,684.9 L29.1,684.8 L29.3,684.6 L29.6,684.5 L29.8,684.3 L30.1,684.2 L30.3,684.0 L30.6,683.8 L30.9,683.6 L31.1,683.4 L31.4,683.2 L31.7,683.0 L32.0,682.7 L32.3,682.4 L32.5,682.2 L32.8,681.9 L33.1,681.6 L33.4,681.3 L33.6,680.9 L33.9,680.6 L34.2,680.2 L34.4,679.9 L34.7,679.5 L34.9,679.1 L35.1,678.7 L35.3,678.3 L35.5,677.9 L35.7,677.5 L35.8,677.1 L36.0,676.7 L36.1,676.3 L36.3,675.9 L36.4,675.5 L36.5,675.2 L36.6,674.8 L36.6,674.4 L36.7,674.0 L36.7,673.7 L36.8,673.3 L36.8,673.0 L36.9,672.7 L36.9,672.4 L36.9,672.1 L36.9,671.8 L36.9,671.5 L36.9,671.2 L36.9,671.0 L36.9,670.7 L36.9,670.5 L36.8,670.3 L36.8,670.0 L36.8,669.8 L36.8,669.6 L36.7,669.4 L36.7,669.3 L36.7,669.1 L36.7,668.9 L36.8,668.7 L37.0,668.5 L37.2,668.3 L37.5,668.1 L37.7,667.9 L37.9,667.7 L38.1,667.6 L38.4,667.4 L38.6,667.2 L38.8,667.0 L39.1,666.8 L39.3,666.6 L39.5,666.4 L39.8,666.3 L40.0,666.1 L40.3,665.9 L40.5,665.7 L40.7,665.6 L41.0,665.4 L41.2,665.2 L41.5,665.1 L41.7,664.9 L42.0,664.8 L42.2,664.6 L42.5,664.5 L42.7,664.3 L43.0,664.2 L43.3,664.0 L43.5,663.9 L43.8,663.7 L44.0,663.6 L44.3,663.4 L44.6,663.3 L44.8,663.2 L45.1,663.0 L45.4,662.9 L45.6,662.8 L45.9,662.7 L46.2,662.5 L46.4,662.4 L46.7,662.3 L47.0,662.2 L47.3,662.1 L47.5,662.0 L47.8,661.9 L48.1,661.8 L48.4,661.7 L48.7,661.6 L48.9,661.5 L49.2,661.4 L49.5,661.3 L49.8,661.2 L50.1,661.1 L50.3,661.0 L50.4,661.2 L50.6,661.3 L50.7,661.4 L50.9,661.5 L51.0,661.6 L51.2,661.7 L51.4,661.9 L51.6,662.0 L51.8,662.1 L52.0,662.3 L52.2,662.4 L52.4,662.5 L52.7,662.7 L52.9,662.8 L53.2,663.0 L53.5,663.1 L53.8,663.2 L54.1,663.4 L54.4,663.5 L54.7,663.6 L55.1,663.8 L55.4,663.9 L55.8,664.0 L56.2,664.1 L56.6,664.2 L57.0,664.3 L57.4,664.4 L57.8,664.4 L58.2,664.5 L58.7,664.5 L59.1,664.6 L59.6,664.6 L60.0,664.6 L60.4,664.6 L60.9,664.6 L61.3,664.5 L61.8,664.5 L62.2,664.4 L62.6,664.4 L63.0,664.3 L63.4,664.2 L63.8,664.1 L64.2,664.0 L64.6,663.9 L64.9,663.8 L65.3,663.6 L65.6,663.5 L65.9,663.4 L66.2,663.2 L66.5,663.1 L66.8,663.0 L67.1,662.8 L67.3,662.7 L67.6,662.5 L67.8,662.4 L68.0,662.3 L68.2,662.1 L68.4,662.0 L68.6,661.9 L68.8,661.7 L69.0,661.6 L69.1,661.5 L69.3,661.4 L69.4,661.3 L69.6,661.2 L69.7,661.0 L69.9,661.1 L70.2,661.2 L70.5,661.3 L70.8,661.4 L71.1,661.5 L71.3,661.6 L71.6,661.7 L71.9,661.8 L72.2,661.9 L72.5,662.0 L72.7,662.1 L73.0,662.2 L73.3,662.3 L73.6,662.4 L73.8,662.5 L74.1,662.7 L74.4,662.8 L74.6,662.9 L74.9,663.0 L75.2,663.2 L75.4,663.3 L75.7,663.4 L76.0,663.6 L76.2,663.7 L76.5,663.9 L76.7,664.0 L77.0,664.2 L77.3,664.3 L77.5,664.5 L77.8,664.6 L78.0,664.8 L78.3,664.9 L78.5,665.1 L78.8,665.2 L79.0,665.4 L79.3,665.6 L79.5,665.7 L79.7,665.9 L80.0,666.1 L80.2,666.3 L80.5,666.4 L80.7,666.6 L80.9,666.8 L81.2,667.0 L81.4,667.2 L81.6,667.4 L81.9,667.6 L82.1,667.7 L82.3,667.9 L82.5,668.1 L82.8,668.3 L83.0,668.5 L83.2,668.7 L83.3,668.9 L83.3,669.1 L83.3,669.3 L83.3,669.4 L83.2,669.6 L83.2,669.8 L83.2,670.0 L83.2,670.3 L83.1,670.5 L83.1,670.7 L83.1,671.0 L83.1,671.2 L83.1,671.5 L83.1,671.8 L83.1,672.1 L83.1,672.4 L83.1,672.7 L83.2,673.0 L83.2,673.3 L83.3,673.7 L83.3,674.0 L83.4,674.4 L83.4,674.8 L83.5,675.2 L83.6,675.5 L83.7,675.9 L83.9,676.3 L84.0,676.7 L84.2,677.1 L84.3,677.5 L84.5,677.9 L84.7,678.3 L84.9,678.7 L85.1,679.1 L85.3,679.5 L85.6,679.9 L85.8,680.2 L86.1,680.6 L86.4,680.9 L86.6,681.3 L86.9,681.6 L87.2,681.9 L87.5,682.2 L87.7,682.4 L88.0,682.7 L88.3,683.0 L88.6,683.2 L88.9,683.4 L89.1,683.6 L89.4,683.8 L89.7,684.0 L89.9,684.2 L90.2,684.3 L90.4,684.5 L90.7,684.6 L90.9,684.8 L91.2,684.9 L91.4,685.0 L91.6,685.1 L91.8,685.2 L92.0,685.3 L92.2,685.4 L92.4,685.5 L92.5,685.5 L92.7,685.6 L92.9,685.7 L93.0,685.7 L93.1,686.0 L93.2,686.2 L93.3,686.5 L93.3,686.8 L93.4,687.1 L93.4,687.4 L93.5,687.7 L93.5,688.0 L93.6,688.3 L93.6,688.6 L93.7,688.9 L93.7,689.2 L93.7,689.5 L93.8,689.8 L93.8,690.0 L93.8,690.3 L93.9,690.6 L93.9,690.9 L93.9,691.2 L93.9,691.5 L94.0,691.8 L94.0,692.1 L94.0,692.4 L94.0,692.7 L94.0,693.0 L94.0,693.3Z" fill="url(#gi)"/><path id="rp" d="M43.8,676 H68 Q77.5,676 77.5,684.5 Q77.5,692.5 69.5,694.5 L80,711 H68.5 L59.5,699 H54 V711 H43.8 V691.4 H65.5 Q68.5,691 68.5,688 Q68.5,684.4 65.5,684.4 H50.8 Z" fill="url(#rg)" stroke="#1a1a1a" stroke-width="0.9"/><path d="M43.8,676 H68 Q77.5,676 77.5,684.5 Q77.5,692.5 69.5,694.5 L80,711 H68.5 L59.5,699 H54 V711 H43.8 V691.4 H65.5 Q68.5,691 68.5,688 Q68.5,684.4 65.5,684.4 H50.8 Z" fill="url(#rpat)"/></g></svg><div class="abs" style="left:122px;top:647px;width:997px;height:94px;border-radius:8px;background:#000"></div><div class="abs" style="left:124px;top:657px;width:140px;height:78px;border-radius:7px;background:#4f595e"></div><div class="abs" style="left:127px;top:665px;width:134px;height:67px;border-radius:4px;background:#2e363b"></div><div class="abs" style="left:124px;top:653px;width:41px;height:56px;border-radius:7px 7px 0 0;background:#4f595e"></div><div class="abs" style="left:127px;top:656px;width:35px;height:49px;border-radius:4px 4px 0 0;background:#000"></div><div class="t" style="left:127px;top:664.2px;width:35px;text-align:center;font-size:31px;transform:translateX(-3px) scaleX(1);font-weight:bold;color:#f0ec18">1</div><div class="t" style="left:173px;top:666px;font-size:18px;color:#e6df2a">50.00mV/</div><div class="t" style="left:173px;top:690px;font-size:18px;color:#f2f2f2">0.00V</div><svg class="abs" style="left:210px;top:714px" width="22" height="14"><path d="M2,10 C5,1.5 9,1.5 11,6.5 C13,11.5 17,12 20,4" fill="none" stroke="#c8c8c8" stroke-width="2"/></svg><div class="abs" style="left:268px;top:657px;width:139px;height:78px;border-radius:7px;background:#19e4ee"></div><div class="abs" style="left:271px;top:665px;width:133px;height:67px;border-radius:4px;background:#2e363b"></div><div class="abs" style="left:268px;top:653px;width:41px;height:56px;border-radius:7px 7px 0 0;background:#19e4ee"></div><div class="abs" style="left:271px;top:656px;width:35px;height:49px;border-radius:4px 4px 0 0;background:#000"></div><div class="t" style="left:271px;top:664.2px;width:35px;text-align:center;font-size:31px;transform:translateX(-3px) scaleX(1);font-weight:bold;color:#20eef6">2</div><div class="t" style="left:317px;top:666px;font-size:18px;color:#2ad8e2">50.00mV/</div><div class="t" style="left:317px;top:690px;font-size:18px;color:#f2f2f2">0.00V</div><svg class="abs" style="left:354px;top:714px" width="22" height="14"><path d="M2,10 C5,1.5 9,1.5 11,6.5 C13,11.5 17,12 20,4" fill="none" stroke="#c8c8c8" stroke-width="2"/></svg><div class="abs" style="left:412px;top:657px;width:139px;height:78px;border-radius:7px;background:#4f595e"></div><div class="abs" style="left:415px;top:665px;width:133px;height:67px;border-radius:4px;background:#2e363b"></div><div class="abs" style="left:412px;top:653px;width:41px;height:56px;border-radius:7px 7px 0 0;background:#4f595e"></div><div class="abs" style="left:415px;top:656px;width:35px;height:49px;border-radius:4px 4px 0 0;background:#000"></div><div class="t" style="left:415px;top:664.2px;width:35px;text-align:center;font-size:31px;transform:translateX(-3px) scaleX(1);font-weight:bold;color:#98a2a8">3</div><div class="t" style="left:461px;top:666px;font-size:18px;color:#8d989e">50.00mV/</div><div class="t" style="left:461px;top:690px;font-size:18px;color:#8d989e">0.00V</div><svg class="abs" style="left:498px;top:715px" width="22" height="14"><path d="M1,3 H20" stroke="#9aa2a6" stroke-width="2"/><path d="M1,9.5 H20" stroke="#9aa2a6" stroke-width="1.6" stroke-dasharray="3.2 2"/></svg><div class="abs" style="left:555px;top:657px;width:140px;height:78px;border-radius:7px;background:#4f595e"></div><div class="abs" style="left:558px;top:665px;width:134px;height:67px;border-radius:4px;background:#2e363b"></div><div class="abs" style="left:555px;top:653px;width:41px;height:56px;border-radius:7px 7px 0 0;background:#4f595e"></div><div class="abs" style="left:558px;top:656px;width:35px;height:49px;border-radius:4px 4px 0 0;background:#000"></div><div class="t" style="left:558px;top:664.2px;width:35px;text-align:center;font-size:31px;transform:translateX(-3px) scaleX(1);font-weight:bold;color:#98a2a8">4</div><div class="t" style="left:604px;top:666px;font-size:18px;color:#8d989e">50.00mV/</div><div class="t" style="left:604px;top:690px;font-size:18px;color:#8d989e">0.00V</div><svg class="abs" style="left:641px;top:715px" width="22" height="14"><path d="M1,3 H20" stroke="#9aa2a6" stroke-width="2"/><path d="M1,9.5 H20" stroke="#9aa2a6" stroke-width="1.6" stroke-dasharray="3.2 2"/></svg><div class="abs" style="left:699px;top:657px;width:137px;height:78px;border-radius:7px;background:#4f595e"></div><div class="abs" style="left:702px;top:665px;width:131px;height:67px;border-radius:4px;background:#2e363b"></div><div class="abs" style="left:699px;top:653px;width:41px;height:56px;border-radius:7px 7px 0 0;background:#4f595e"></div><div class="abs" style="left:702px;top:656px;width:35px;height:49px;border-radius:4px 4px 0 0;background:#000"></div><div class="t" style="left:702px;top:666.5px;width:35px;text-align:center;font-size:35px;transform:translateX(2px) scaleX(0.95);font-weight:bold;color:#d8d8d8">D</div><div class="t" style="left:739.0px;top:669.5px;font-size:12.5px;color:#c6cacd">0</div><div class="t" style="left:762.8px;top:669.5px;font-size:12.5px;color:#c6cacd">1</div><div class="t" style="left:786.6px;top:669.5px;font-size:12.5px;color:#c6cacd">2</div><div class="t" style="left:810.4px;top:669.5px;font-size:12.5px;color:#c6cacd">3</div><div class="t" style="left:739.0px;top:685.8px;font-size:12.5px;color:#c6cacd">4</div><div class="t" style="left:762.8px;top:685.8px;font-size:12.5px;color:#c6cacd">5</div><div class="t" style="left:786.6px;top:685.8px;font-size:12.5px;color:#c6cacd">6</div><div class="t" style="left:810.4px;top:685.8px;font-size:12.5px;color:#c6cacd">7</div><div class="t" style="left:739.0px;top:702.1px;font-size:12.5px;color:#c6cacd">8</div><div class="t" style="left:762.8px;top:702.1px;font-size:12.5px;color:#c6cacd">9</div><div class="t" style="left:786.6px;top:702.1px;font-size:12.5px;color:#c6cacd">10</div><div class="t" style="left:810.4px;top:702.1px;font-size:12.5px;color:#c6cacd">11</div><div class="t" style="left:739.0px;top:718.4px;font-size:12.5px;color:#c6cacd">12</div><div class="t" style="left:762.8px;top:718.4px;font-size:12.5px;color:#c6cacd">13</div><div class="t" style="left:786.6px;top:718.4px;font-size:12.5px;color:#c6cacd">14</div><div class="t" style="left:810.4px;top:718.4px;font-size:12.5px;color:#c6cacd">15</div><div class="abs" style="left:839px;top:657px;width:137px;height:78px;border-radius:7px;background:#4f595e"></div><div class="abs" style="left:842px;top:665px;width:131px;height:67px;border-radius:4px;background:#2e363b"></div><div class="abs" style="left:839px;top:653px;width:41px;height:56px;border-radius:7px 7px 0 0;background:#4f595e"></div><div class="abs" style="left:842px;top:656px;width:35px;height:49px;border-radius:4px 4px 0 0;background:#000"></div><div class="t" style="left:842px;top:667.2px;width:35px;text-align:center;font-size:36px;transform:translateX(2px) scaleX(1);font-weight:bold;color:#d8d8d8">G</div><svg class="abs" style="left:889px;top:664px" width="40" height="22"><path d="M2.5,11 C6,3 12,1 17,7 C21,13 27,20 35,12" fill="none" stroke="#d0d0d0" stroke-width="1.4"/></svg><div class="t" style="left:888px;top:687px;font-size:16px;color:#d8dcde">5.00V</div><div class="t" style="left:888px;top:709px;font-size:17px;color:#d8dcde">1kHz</div><div class="abs" style="left:979px;top:657px;width:137px;height:78px;border-radius:7px;background:#4f595e"></div><div class="abs" style="left:982px;top:665px;width:131px;height:67px;border-radius:4px;background:#2e363b"></div><div class="abs" style="left:979px;top:653px;width:41px;height:56px;border-radius:7px 7px 0 0;background:#4f595e"></div><div class="abs" style="left:982px;top:656px;width:35px;height:49px;border-radius:4px 4px 0 0;background:#000"></div><div class="t" style="left:982px;top:665.3px;width:35px;text-align:center;font-size:34px;transform:translateX(-1px) scaleX(1.08);font-weight:bold;color:#d8d8d8">M</div><div class="abs" style="left:1020px;top:666px;width:94px;height:64px;background:#252c30"></div><div class="abs" style="left:1021px;top:668.5px;width:45px;height:30px;background:#7f8a91"></div><div class="t" style="left:1021px;top:675.5px;width:45px;text-align:center;font-size:15px;color:#e6e9ea">M1</div><div class="abs" style="left:1068px;top:668.5px;width:45px;height:30px;background:#7f8a91"></div><div class="t" style="left:1068px;top:675.5px;width:45px;text-align:center;font-size:15px;color:#e6e9ea">M3</div><div class="abs" style="left:1021px;top:700px;width:45px;height:30px;background:#7f8a91"></div><div class="t" style="left:1021px;top:707px;width:45px;text-align:center;font-size:15px;color:#e6e9ea">M2</div><div class="abs" style="left:1068px;top:700px;width:45px;height:30px;background:#7f8a91"></div><div class="t" style="left:1068px;top:707px;width:45px;text-align:center;font-size:15px;color:#e6e9ea">M4</div><div class="abs" style="left:1127px;top:647px;width:144px;height:94px;border-radius:8px;background:#000"></div><svg class="abs" style="left:1160px;top:675px" width="80" height="35"><g transform="translate(-1160,-675)"><polygon points="1174,687.5 1178,687.5 1174.8,699.8 1180,699.8 1179.3,703 1170,703" fill="#f2f2f2"/><polygon points="1189,687.5 1192.8,687.5 1178.5,706.5 1174.5,706.5" fill="#9c9c9c"/><polygon points="1180.5,687.5 1184.5,687.5 1189,703 1185,703" fill="#f2f2f2"/><polygon points="1194.5,687.5 1198.3,687.5 1194.3,703 1190.5,703" fill="#f2f2f2"/><path d="M1216,684.8 L1219.4,688.5 V699.8 L1216,703.3 L1207.5,696 Q1205.8,694 1207.5,692 Z" fill="none" stroke="#f0f0f0" stroke-width="1.5" stroke-linejoin="round"/><path d="M1215,686.5 V702" stroke="#e8e8e8" stroke-width="1.1"/><path d="M1215,691.8 A2.2,2.2 0 0 1 1215,696.2" fill="none" stroke="#e8e8e8" stroke-width="1.1"/><path d="M1221.5,690 L1230,699 M1230,690 L1221.5,699" stroke="#d8d8d8" stroke-width="1"/></g></svg></body></html>
